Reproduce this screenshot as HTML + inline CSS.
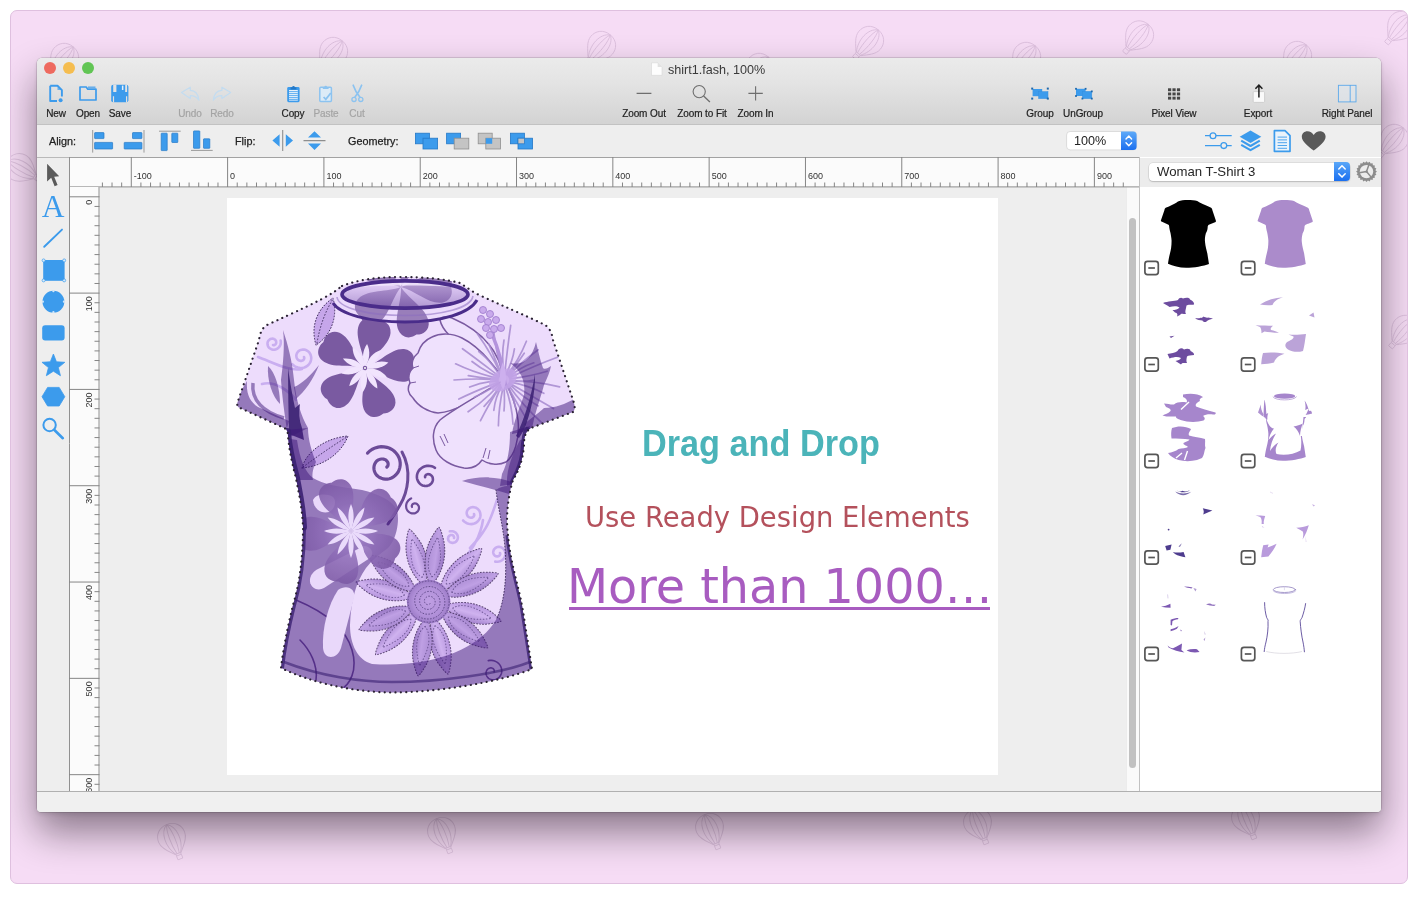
<!DOCTYPE html><html><head><meta charset="utf-8"><title>shirt1.fash</title><style>
html,body{margin:0;padding:0;background:#fff;}
body{width:1420px;height:898px;position:relative;overflow:hidden;font-family:"Liberation Sans",sans-serif;}
.abs{position:absolute}
#desk{position:absolute;left:10px;top:10px;width:1396px;height:871.5px;background:#f6dcf5;border:1px solid #dfc0df;border-radius:7px;overflow:hidden}
#win{will-change:transform;position:absolute;left:26px;top:47px;width:1344px;height:754px;background:#ececec;border-radius:5px 5px 4px 4px;box-shadow:0 0 0 0.5px rgba(0,0,0,.22),0 20px 38px rgba(10,0,10,.46),0 2px 5px rgba(0,0,0,.12);overflow:hidden}
#title{position:absolute;left:0;top:0;width:1344px;height:65.5px;background:linear-gradient(#ebebeb,#e3e3e3 40%,#d3d3d3);border-bottom:1px solid #c2c2c2}
.tl{position:absolute;top:4px;width:12px;height:12px;border-radius:50%}
.lbl{position:absolute;font-size:10px;color:#222;-webkit-text-stroke:0.2px #222;white-space:nowrap;transform:translateX(-50%);top:49.5px;line-height:12px;letter-spacing:-0.1px}
.lbl.dis{color:#a4a4a4;-webkit-text-stroke:0.2px #a4a4a4}
#tb2{position:absolute;left:0;top:66.5px;width:1344px;height:32.5px;background:#eeeeee;border-bottom:1px solid #b9b9b9}
.l2{position:absolute;font-size:10.8px;color:#222;-webkit-text-stroke:0.25px #222;top:10.5px;line-height:12px;white-space:nowrap}
</style></head><body>
<div id="desk">
<svg class="abs" style="left:0;top:0" width="1396" height="872" viewBox="0 0 1396 872" fill="none" stroke="#dcc0dd" stroke-width="0.9"><g transform="translate(53 47) rotate(40) scale(1.0)"><path d="M0,-14.5 C9,-14.5 14,-8 14,-1 C14,6 8,11 3.2,16.5 L-3.2,16.5 C-8,11 -14,6 -14,-1 C-14,-8 -9,-14.5 0,-14.5Z"/><path d="M0,-14.5 C-3,-8 -3.5,6 -1.2,16.5 M0,-14.5 C3,-8 3.5,6 1.2,16.5 M0,-14.5 C-9,-9 -9.5,6 -2.6,16.5 M0,-14.5 C9,-9 9.5,6 2.6,16.5"/><rect x="-2.6" y="18.4" width="5.2" height="4.2" rx="0.6"/><path d="M-2.8,16.5 L-2.3,18.4 M2.8,16.5 L2.3,18.4"/></g><g transform="translate(322 41) rotate(40) scale(1.0)"><path d="M0,-14.5 C9,-14.5 14,-8 14,-1 C14,6 8,11 3.2,16.5 L-3.2,16.5 C-8,11 -14,6 -14,-1 C-14,-8 -9,-14.5 0,-14.5Z"/><path d="M0,-14.5 C-3,-8 -3.5,6 -1.2,16.5 M0,-14.5 C3,-8 3.5,6 1.2,16.5 M0,-14.5 C-9,-9 -9.5,6 -2.6,16.5 M0,-14.5 C9,-9 9.5,6 2.6,16.5"/><rect x="-2.6" y="18.4" width="5.2" height="4.2" rx="0.6"/><path d="M-2.8,16.5 L-2.3,18.4 M2.8,16.5 L2.3,18.4"/></g><g transform="translate(590 35) rotate(40) scale(1.0)"><path d="M0,-14.5 C9,-14.5 14,-8 14,-1 C14,6 8,11 3.2,16.5 L-3.2,16.5 C-8,11 -14,6 -14,-1 C-14,-8 -9,-14.5 0,-14.5Z"/><path d="M0,-14.5 C-3,-8 -3.5,6 -1.2,16.5 M0,-14.5 C3,-8 3.5,6 1.2,16.5 M0,-14.5 C-9,-9 -9.5,6 -2.6,16.5 M0,-14.5 C9,-9 9.5,6 2.6,16.5"/><rect x="-2.6" y="18.4" width="5.2" height="4.2" rx="0.6"/><path d="M-2.8,16.5 L-2.3,18.4 M2.8,16.5 L2.3,18.4"/></g><g transform="translate(748 57) rotate(40) scale(1.0)"><path d="M0,-14.5 C9,-14.5 14,-8 14,-1 C14,6 8,11 3.2,16.5 L-3.2,16.5 C-8,11 -14,6 -14,-1 C-14,-8 -9,-14.5 0,-14.5Z"/><path d="M0,-14.5 C-3,-8 -3.5,6 -1.2,16.5 M0,-14.5 C3,-8 3.5,6 1.2,16.5 M0,-14.5 C-9,-9 -9.5,6 -2.6,16.5 M0,-14.5 C9,-9 9.5,6 2.6,16.5"/><rect x="-2.6" y="18.4" width="5.2" height="4.2" rx="0.6"/><path d="M-2.8,16.5 L-2.3,18.4 M2.8,16.5 L2.3,18.4"/></g><g transform="translate(858 30) rotate(40) scale(1.0)"><path d="M0,-14.5 C9,-14.5 14,-8 14,-1 C14,6 8,11 3.2,16.5 L-3.2,16.5 C-8,11 -14,6 -14,-1 C-14,-8 -9,-14.5 0,-14.5Z"/><path d="M0,-14.5 C-3,-8 -3.5,6 -1.2,16.5 M0,-14.5 C3,-8 3.5,6 1.2,16.5 M0,-14.5 C-9,-9 -9.5,6 -2.6,16.5 M0,-14.5 C9,-9 9.5,6 2.6,16.5"/><rect x="-2.6" y="18.4" width="5.2" height="4.2" rx="0.6"/><path d="M-2.8,16.5 L-2.3,18.4 M2.8,16.5 L2.3,18.4"/></g><g transform="translate(1015 46) rotate(40) scale(1.0)"><path d="M0,-14.5 C9,-14.5 14,-8 14,-1 C14,6 8,11 3.2,16.5 L-3.2,16.5 C-8,11 -14,6 -14,-1 C-14,-8 -9,-14.5 0,-14.5Z"/><path d="M0,-14.5 C-3,-8 -3.5,6 -1.2,16.5 M0,-14.5 C3,-8 3.5,6 1.2,16.5 M0,-14.5 C-9,-9 -9.5,6 -2.6,16.5 M0,-14.5 C9,-9 9.5,6 2.6,16.5"/><rect x="-2.6" y="18.4" width="5.2" height="4.2" rx="0.6"/><path d="M-2.8,16.5 L-2.3,18.4 M2.8,16.5 L2.3,18.4"/></g><g transform="translate(1128 24.5) rotate(40) scale(1.0)"><path d="M0,-14.5 C9,-14.5 14,-8 14,-1 C14,6 8,11 3.2,16.5 L-3.2,16.5 C-8,11 -14,6 -14,-1 C-14,-8 -9,-14.5 0,-14.5Z"/><path d="M0,-14.5 C-3,-8 -3.5,6 -1.2,16.5 M0,-14.5 C3,-8 3.5,6 1.2,16.5 M0,-14.5 C-9,-9 -9.5,6 -2.6,16.5 M0,-14.5 C9,-9 9.5,6 2.6,16.5"/><rect x="-2.6" y="18.4" width="5.2" height="4.2" rx="0.6"/><path d="M-2.8,16.5 L-2.3,18.4 M2.8,16.5 L2.3,18.4"/></g><g transform="translate(1286 45) rotate(40) scale(1.0)"><path d="M0,-14.5 C9,-14.5 14,-8 14,-1 C14,6 8,11 3.2,16.5 L-3.2,16.5 C-8,11 -14,6 -14,-1 C-14,-8 -9,-14.5 0,-14.5Z"/><path d="M0,-14.5 C-3,-8 -3.5,6 -1.2,16.5 M0,-14.5 C3,-8 3.5,6 1.2,16.5 M0,-14.5 C-9,-9 -9.5,6 -2.6,16.5 M0,-14.5 C9,-9 9.5,6 2.6,16.5"/><rect x="-2.6" y="18.4" width="5.2" height="4.2" rx="0.6"/><path d="M-2.8,16.5 L-2.3,18.4 M2.8,16.5 L2.3,18.4"/></g><g transform="translate(1390 15) rotate(40) scale(1.0)"><path d="M0,-14.5 C9,-14.5 14,-8 14,-1 C14,6 8,11 3.2,16.5 L-3.2,16.5 C-8,11 -14,6 -14,-1 C-14,-8 -9,-14.5 0,-14.5Z"/><path d="M0,-14.5 C-3,-8 -3.5,6 -1.2,16.5 M0,-14.5 C3,-8 3.5,6 1.2,16.5 M0,-14.5 C-9,-9 -9.5,6 -2.6,16.5 M0,-14.5 C9,-9 9.5,6 2.6,16.5"/><rect x="-2.6" y="18.4" width="5.2" height="4.2" rx="0.6"/><path d="M-2.8,16.5 L-2.3,18.4 M2.8,16.5 L2.3,18.4"/></g><g transform="translate(1383 128) rotate(40) scale(1.0)"><path d="M0,-14.5 C9,-14.5 14,-8 14,-1 C14,6 8,11 3.2,16.5 L-3.2,16.5 C-8,11 -14,6 -14,-1 C-14,-8 -9,-14.5 0,-14.5Z"/><path d="M0,-14.5 C-3,-8 -3.5,6 -1.2,16.5 M0,-14.5 C3,-8 3.5,6 1.2,16.5 M0,-14.5 C-9,-9 -9.5,6 -2.6,16.5 M0,-14.5 C9,-9 9.5,6 2.6,16.5"/><rect x="-2.6" y="18.4" width="5.2" height="4.2" rx="0.6"/><path d="M-2.8,16.5 L-2.3,18.4 M2.8,16.5 L2.3,18.4"/></g><g transform="translate(1394 319) rotate(40) scale(1.0)"><path d="M0,-14.5 C9,-14.5 14,-8 14,-1 C14,6 8,11 3.2,16.5 L-3.2,16.5 C-8,11 -14,6 -14,-1 C-14,-8 -9,-14.5 0,-14.5Z"/><path d="M0,-14.5 C-3,-8 -3.5,6 -1.2,16.5 M0,-14.5 C3,-8 3.5,6 1.2,16.5 M0,-14.5 C-9,-9 -9.5,6 -2.6,16.5 M0,-14.5 C9,-9 9.5,6 2.6,16.5"/><rect x="-2.6" y="18.4" width="5.2" height="4.2" rx="0.6"/><path d="M-2.8,16.5 L-2.3,18.4 M2.8,16.5 L2.3,18.4"/></g><g transform="translate(9 157) rotate(-60) scale(1.0)"><path d="M0,-14.5 C9,-14.5 14,-8 14,-1 C14,6 8,11 3.2,16.5 L-3.2,16.5 C-8,11 -14,6 -14,-1 C-14,-8 -9,-14.5 0,-14.5Z"/><path d="M0,-14.5 C-3,-8 -3.5,6 -1.2,16.5 M0,-14.5 C3,-8 3.5,6 1.2,16.5 M0,-14.5 C-9,-9 -9.5,6 -2.6,16.5 M0,-14.5 C9,-9 9.5,6 2.6,16.5"/><rect x="-2.6" y="18.4" width="5.2" height="4.2" rx="0.6"/><path d="M-2.8,16.5 L-2.3,18.4 M2.8,16.5 L2.3,18.4"/></g><g transform="translate(161 827) rotate(-22) scale(1.0)"><path d="M0,-14.5 C9,-14.5 14,-8 14,-1 C14,6 8,11 3.2,16.5 L-3.2,16.5 C-8,11 -14,6 -14,-1 C-14,-8 -9,-14.5 0,-14.5Z"/><path d="M0,-14.5 C-3,-8 -3.5,6 -1.2,16.5 M0,-14.5 C3,-8 3.5,6 1.2,16.5 M0,-14.5 C-9,-9 -9.5,6 -2.6,16.5 M0,-14.5 C9,-9 9.5,6 2.6,16.5"/><rect x="-2.6" y="18.4" width="5.2" height="4.2" rx="0.6"/><path d="M-2.8,16.5 L-2.3,18.4 M2.8,16.5 L2.3,18.4"/></g><g transform="translate(431 821) rotate(-22) scale(1.0)"><path d="M0,-14.5 C9,-14.5 14,-8 14,-1 C14,6 8,11 3.2,16.5 L-3.2,16.5 C-8,11 -14,6 -14,-1 C-14,-8 -9,-14.5 0,-14.5Z"/><path d="M0,-14.5 C-3,-8 -3.5,6 -1.2,16.5 M0,-14.5 C3,-8 3.5,6 1.2,16.5 M0,-14.5 C-9,-9 -9.5,6 -2.6,16.5 M0,-14.5 C9,-9 9.5,6 2.6,16.5"/><rect x="-2.6" y="18.4" width="5.2" height="4.2" rx="0.6"/><path d="M-2.8,16.5 L-2.3,18.4 M2.8,16.5 L2.3,18.4"/></g><g transform="translate(699 817) rotate(-22) scale(1.0)"><path d="M0,-14.5 C9,-14.5 14,-8 14,-1 C14,6 8,11 3.2,16.5 L-3.2,16.5 C-8,11 -14,6 -14,-1 C-14,-8 -9,-14.5 0,-14.5Z"/><path d="M0,-14.5 C-3,-8 -3.5,6 -1.2,16.5 M0,-14.5 C3,-8 3.5,6 1.2,16.5 M0,-14.5 C-9,-9 -9.5,6 -2.6,16.5 M0,-14.5 C9,-9 9.5,6 2.6,16.5"/><rect x="-2.6" y="18.4" width="5.2" height="4.2" rx="0.6"/><path d="M-2.8,16.5 L-2.3,18.4 M2.8,16.5 L2.3,18.4"/></g><g transform="translate(967 812) rotate(-22) scale(1.0)"><path d="M0,-14.5 C9,-14.5 14,-8 14,-1 C14,6 8,11 3.2,16.5 L-3.2,16.5 C-8,11 -14,6 -14,-1 C-14,-8 -9,-14.5 0,-14.5Z"/><path d="M0,-14.5 C-3,-8 -3.5,6 -1.2,16.5 M0,-14.5 C3,-8 3.5,6 1.2,16.5 M0,-14.5 C-9,-9 -9.5,6 -2.6,16.5 M0,-14.5 C9,-9 9.5,6 2.6,16.5"/><rect x="-2.6" y="18.4" width="5.2" height="4.2" rx="0.6"/><path d="M-2.8,16.5 L-2.3,18.4 M2.8,16.5 L2.3,18.4"/></g><g transform="translate(1235 807) rotate(-22) scale(1.0)"><path d="M0,-14.5 C9,-14.5 14,-8 14,-1 C14,6 8,11 3.2,16.5 L-3.2,16.5 C-8,11 -14,6 -14,-1 C-14,-8 -9,-14.5 0,-14.5Z"/><path d="M0,-14.5 C-3,-8 -3.5,6 -1.2,16.5 M0,-14.5 C3,-8 3.5,6 1.2,16.5 M0,-14.5 C-9,-9 -9.5,6 -2.6,16.5 M0,-14.5 C9,-9 9.5,6 2.6,16.5"/><rect x="-2.6" y="18.4" width="5.2" height="4.2" rx="0.6"/><path d="M-2.8,16.5 L-2.3,18.4 M2.8,16.5 L2.3,18.4"/></g></svg>
<div id="win">
<div id="title">
<div class="tl" style="left:7.0px;background:#ee6a5f"></div>
<div class="tl" style="left:26.1px;background:#f5bd4f"></div>
<div class="tl" style="left:45.4px;background:#61c554"></div>
<div class="abs" style="left:631px;top:4.5px;font-size:12.6px;line-height:14px;color:#3a3a3a;white-space:nowrap">shirt1.fash, 100%</div>
<div class="lbl" style="left:19px">New</div>
<div class="lbl" style="left:51px">Open</div>
<div class="lbl" style="left:83px">Save</div>
<div class="lbl dis" style="left:153px">Undo</div>
<div class="lbl dis" style="left:185px">Redo</div>
<div class="lbl" style="left:256px">Copy</div>
<div class="lbl dis" style="left:289px">Paste</div>
<div class="lbl dis" style="left:320px">Cut</div>
<div class="lbl" style="left:607px">Zoom Out</div>
<div class="lbl" style="left:665px">Zoom to Fit</div>
<div class="lbl" style="left:718.5px">Zoom In</div>
<div class="lbl" style="left:1003px">Group</div>
<div class="lbl" style="left:1046px">UnGroup</div>
<div class="lbl" style="left:1137px">Pixel View</div>
<div class="lbl" style="left:1221px">Export</div>
<div class="lbl" style="left:1310px">Right Panel</div>
<svg class="abs" style="left:0;top:0" width="1344" height="100" viewBox="37 58 1344 100"><path d="M651.5,62.8 h6.2 l4.3,4.3 v8.2 h-10.5z" fill="#fdfdfd" stroke="#d0d0d0" stroke-width="0.5"/><path d="M657.7,62.8 v4.3 h4.3z" fill="#e2e2e2"/><path d="M50.2,85.7 h7.3 l4.4,4.4 v6.5 M57,101 h-6.8 v-15.3" fill="none" stroke="#3c9bec" stroke-width="1.9" stroke-linejoin="round"/><path d="M57.5,85.7 v4.4 h4.4z" fill="#3c9bec" opacity="0.7"/><circle cx="60.6" cy="100.2" r="2" fill="#3c9bec"/><path d="M80,100 v-13 h6.2 l1.6,2.2 h8.2 v10.8z" fill="none" stroke="#3c9bec" stroke-width="1.7" stroke-linejoin="round"/><path d="M88,87.2 h7.5" stroke="#3c9bec" stroke-width="1.4" opacity="0.8"/><path d="M113.2,84.8 h13.2 a2,2 0 0 1 2,2 v13.5 a2,2 0 0 1 -2,2 h-13.2 a2,2 0 0 1 -2,-2 v-13.5 a2,2 0 0 1 2,-2z" fill="#3c9bec"/><rect x="113.2" y="84.6" width="3.2" height="7.4" fill="#e3e3e3"/><rect x="125.2" y="84.6" width="1.9" height="7.4" fill="#e3e3e3"/><rect x="121.9" y="85.6" width="1.5" height="4.4" fill="#e6f1fb"/><path d="M113.5,102.4 v-6.2 M126.6,102.4 v-6.2" stroke="#e0e0e0" stroke-width="1.2" fill="none"/><path d="M181.5,92.5 l8.8,-5.3 v3.2 c5,0.3 8,4 8.6,9.8 c-2,-3.2 -4.6,-4.6 -8.6,-4.6 v3z" fill="none" stroke="#c3dcf0" stroke-width="1.2" stroke-linejoin="round"/><path d="M230.7,92.5 l-8.8,-5.3 v3.2 c-5,0.3 -8,4 -8.6,9.8 c2,-3.2 4.6,-4.6 8.6,-4.6 v3z" fill="none" stroke="#c3dcf0" stroke-width="1.2" stroke-linejoin="round"/><rect x="287.2" y="87" width="12.4" height="15.2" rx="1.4" fill="#3c9bec"/><rect x="289" y="90" width="8.8" height="10.6" fill="#e9f2fb"/><path d="M289,91.6h8.8M289,93.6h8.8M289,95.6h8.8M289,97.6h8.8M289,99.4h8.8" stroke="#3c9bec" stroke-width="0.8"/><path d="M290.6,89.6 v-2.4 h1.6 a1.3,1.3 0 0 1 2.6,0 h1.6 v2.4z" fill="#2579c7"/><rect x="319.8" y="87.2" width="11.6" height="14.4" rx="1" fill="#dcebf7" stroke="#8cc3f0" stroke-width="1.5"/><path d="M322.8,89 v-2 h1.6 a1.3,1.3 0 0 1 2.6,0 h1.6 v2z" fill="#8cc3f0"/><path d="M323.6,97 l2.2,2.4 l5,-6.4" fill="none" stroke="#8cc3f0" stroke-width="1.8"/><path d="M353.2,85.2 c1.5,4.5 4,8.5 6.6,11.8 M361.6,85.2 c-1.5,4.5 -4,8.5 -6.6,11.8" fill="none" stroke="#8cc3f0" stroke-width="1.7" stroke-linecap="round"/><circle cx="354" cy="99.4" r="2.1" fill="none" stroke="#8cc3f0" stroke-width="1.3"/><circle cx="360.8" cy="99.4" r="2.1" fill="none" stroke="#8cc3f0" stroke-width="1.3"/><path d="M636.6,93.4 h14.8" stroke="#6e6e6e" stroke-width="1.1"/><circle cx="699.2" cy="91.6" r="6.1" fill="none" stroke="#6e6e6e" stroke-width="1.1"/><path d="M703.6,96 l6.3,6" stroke="#6e6e6e" stroke-width="1.3"/><path d="M748.4,93.4 h14.4 M755.6,86.2 v14.4" stroke="#6e6e6e" stroke-width="1.1"/><rect x="1032.6" y="89" width="9.6" height="7.2" fill="#3c9bec"/><rect x="1038.6" y="91.6" width="9.4" height="7" fill="#3c9bec" stroke="#3490df" stroke-width="0.5"/><rect x="1031.2" y="87.6" width="2" height="2" fill="#1d68ad"/><rect x="1046.8" y="87.6" width="2" height="2" fill="#1d68ad"/><rect x="1031.2" y="97.6" width="2" height="2" fill="#1d68ad"/><rect x="1046.8" y="97.6" width="2" height="2" fill="#1d68ad"/><rect x="1076" y="88.8" width="9.6" height="7.2" fill="#3c9bec"/><rect x="1082.4" y="91.4" width="9.4" height="7.2" fill="#3c9bec" stroke="#3490df" stroke-width="0.5"/><rect x="1075.1" y="87.89999999999999" width="1.8" height="1.8" fill="#1d68ad"/><rect x="1084.6999999999998" y="87.89999999999999" width="1.8" height="1.8" fill="#1d68ad"/><rect x="1075.1" y="95.1" width="1.8" height="1.8" fill="#1d68ad"/><rect x="1081.5" y="97.69999999999999" width="1.8" height="1.8" fill="#1d68ad"/><rect x="1090.8999999999999" y="97.69999999999999" width="1.8" height="1.8" fill="#1d68ad"/><rect x="1090.8999999999999" y="90.5" width="1.8" height="1.8" fill="#1d68ad"/><rect x="1168.0" y="88.3" width="3.2" height="2.9" fill="#474747"/><rect x="1168.0" y="92.5" width="3.2" height="2.9" fill="#474747"/><rect x="1168.0" y="96.7" width="3.2" height="2.9" fill="#474747"/><rect x="1172.45" y="88.3" width="3.2" height="2.9" fill="#474747"/><rect x="1172.45" y="92.5" width="3.2" height="2.9" fill="#474747"/><rect x="1172.45" y="96.7" width="3.2" height="2.9" fill="#474747"/><rect x="1176.9" y="88.3" width="3.2" height="2.9" fill="#474747"/><rect x="1176.9" y="92.5" width="3.2" height="2.9" fill="#474747"/><rect x="1176.9" y="96.7" width="3.2" height="2.9" fill="#474747"/><rect x="1253.2" y="91.6" width="11.4" height="10.8" rx="1" fill="#fafafa" stroke="#c6c6c6" stroke-width="0.8"/><path d="M1258.9,97.4 v-11.6 M1255.4,88.8 l3.5,-3.6 l3.5,3.6" fill="none" stroke="#1e1e1e" stroke-width="1.5"/><rect x="1338.4" y="85.3" width="17.6" height="16.6" fill="#dde6ee" fill-opacity="0.5" stroke="#3c9bec" stroke-width="0.9" stroke-opacity="0.8"/><path d="M1350.2,85.3 v16.6" stroke="#3c9bec" stroke-width="0.9" stroke-opacity="0.8"/></svg>
</div>
<div id="tb2">
<svg class="abs" style="left:0;top:-1.3px" width="1344" height="34" viewBox="37 124 1344 34"><path d="M92.7,131 V153.6" stroke="#9a9a9a" stroke-width="1"/><rect x="94.6" y="133.6" width="9.4" height="6.0" rx="0.5" fill="#3c9bec" stroke="#2579c7" stroke-width="0.7"/><rect x="94.6" y="143.4" width="18.0" height="6.6" rx="0.5" fill="#3c9bec" stroke="#2579c7" stroke-width="0.7"/><path d="M144,131 V153.6" stroke="#9a9a9a" stroke-width="1"/><rect x="132.5" y="133.6" width="9.4" height="6.0" rx="0.5" fill="#3c9bec" stroke="#2579c7" stroke-width="0.7"/><rect x="124.2" y="143.4" width="17.7" height="6.6" rx="0.5" fill="#3c9bec" stroke="#2579c7" stroke-width="0.7"/><path d="M159,132.2 H180.7" stroke="#9a9a9a" stroke-width="1"/><rect x="161.2" y="134.2" width="6.0" height="17.4" rx="0.5" fill="#3c9bec" stroke="#2579c7" stroke-width="0.7"/><rect x="171.8" y="134.2" width="6.0" height="9.3" rx="0.5" fill="#3c9bec" stroke="#2579c7" stroke-width="0.7"/><path d="M191,151.4 H212.7" stroke="#9a9a9a" stroke-width="1"/><rect x="193.5" y="131.9" width="6.3" height="17.4" rx="0.5" fill="#3c9bec" stroke="#2579c7" stroke-width="0.7"/><rect x="203.5" y="139.8" width="6.3" height="9.5" rx="0.5" fill="#3c9bec" stroke="#2579c7" stroke-width="0.7"/><path d="M282.7,131 V152" stroke="#8e8e8e" stroke-width="1.1"/><path d="M279.6,135.2 v12.6 l-7.2,-6.3z M285.8,135.2 v12.6 l7.2,-6.3z" fill="#3c9bec"/><path d="M303.5,141.6 H325.5" stroke="#8e8e8e" stroke-width="1.1"/><path d="M308,138.6 h13 l-6.5,-6.4z M308,144.6 h13 l-6.5,6.4z" fill="#3c9bec"/><rect x="415.4" y="134.2" width="14" height="10.6" fill="#3c9bec" stroke="#2579c7" stroke-width="0.8"/><rect x="423" y="139.2" width="14.6" height="10.8" fill="#3c9bec" stroke="#2579c7" stroke-width="0.8"/><rect x="446.6" y="134.2" width="14" height="10.6" fill="#3c9bec" stroke="#2579c7" stroke-width="0.8"/><rect x="454.2" y="139.2" width="14.6" height="10.8" fill="#c4c4c4" stroke="#8f8f8f" stroke-width="0.8"/><rect x="478.2" y="134.2" width="14" height="10.6" fill="#c4c4c4" stroke="#8f8f8f" stroke-width="0.8"/><rect x="485.8" y="139.2" width="14.6" height="10.8" fill="#c4c4c4" stroke="#8f8f8f" stroke-width="0.8"/><rect x="485.8" y="139.2" width="6.4" height="5.6" fill="#3c9bec"/><rect x="510.4" y="134.2" width="14" height="10.6" fill="#3c9bec" stroke="#2579c7" stroke-width="0.8"/><rect x="518" y="139.2" width="14.6" height="10.8" fill="#3c9bec" stroke="#2579c7" stroke-width="0.8"/><rect x="518" y="139.2" width="6.4" height="5.6" fill="#c4c4c4" stroke="#2579c7" stroke-width="0.7"/><g transform="translate(0 1.1)"><rect x="1066.6" y="131.4" width="70" height="18.4" rx="3.5" fill="#fff" stroke="#c9c9c9" stroke-width="0.6"/><defs><linearGradient id="stp" x1="0" y1="0" x2="0" y2="1"><stop offset="0" stop-color="#5eaaf9"/><stop offset="1" stop-color="#1c70ef"/></linearGradient></defs><path d="M1121,131.4 h12.1 a3.5,3.5 0 0 1 3.5,3.5 v11.4 a3.5,3.5 0 0 1 -3.5,3.5 h-12.1z" fill="url(#stp)"/><path d="M1126,138.8 l2.8,-3 l2.8,3 M1126,142.6 l2.8,3 l2.8,-3" fill="none" stroke="#fff" stroke-width="1.4" stroke-linecap="round" stroke-linejoin="round"/><text x="1074" y="145.2" font-family="Liberation Sans, sans-serif" font-size="12.6" fill="#222">100%</text><path d="M1205,135.6 h5 M1216,135.6 h15.7 M1205,145.5 h15.7 M1226.8,145.5 h4.9" stroke="#3c9bec" stroke-width="1.3"/><circle cx="1213" cy="135.6" r="2.9" fill="none" stroke="#3c9bec" stroke-width="1.3"/><circle cx="1223.8" cy="145.5" r="2.9" fill="none" stroke="#3c9bec" stroke-width="1.3"/><path d="M1250.5,130.4 l10.8,6.2 l-10.8,6.2 l-10.8,-6.2z" fill="#3c9bec"/><path d="M1241.2,140.6 l9.3,5.3 l9.3,-5.3 M1241.2,144.8 l9.3,5.3 l9.3,-5.3" fill="none" stroke="#3c9bec" stroke-width="2.1" stroke-linejoin="round"/><path d="M1274.4,130.6 h10.6 l5,5 v15.6 h-15.6z" fill="#eaf3fb" stroke="#3c9bec" stroke-width="1.7" stroke-linejoin="round"/><path d="M1277.6,137h9.4M1277.6,139.8h9.4M1277.6,142.6h9.4M1277.6,145.4h9.4M1277.6,148.2h9.4" stroke="#3c9bec" stroke-width="0.9"/><path d="M1313.7,150.4 C1308,146 1301.8,141.5 1301.8,136.6 C1301.8,133.4 1304.4,131.2 1307.4,131.2 C1310,131.2 1312.4,132.6 1313.7,135 C1315,132.6 1317.4,131.2 1320,131.2 C1323,131.2 1325.6,133.4 1325.6,136.6 C1325.6,141.5 1319.4,146 1313.7,150.4Z" fill="#595959"/></g></svg>
<div class="l2" style="left:12px">Align:</div><div class="l2" style="left:198px">Flip:</div><div class="l2" style="left:311px">Geometry:</div>
</div>
<div class="abs" style="left:0;top:100px;width:32px;height:634px;background:#eeeeee"></div>
<svg class="abs" style="left:0;top:100px" width="32" height="300" viewBox="37 158 32 300"><path d="M47.1,163.8 V181.6 L51.2,177.8 L54.6,186.2 L57.6,184.9 L54.2,176.7 L59.2,176.2Z" fill="#5a5a5a"/><text x="53.1" y="217" text-anchor="middle" font-family="Liberation Serif, serif" font-size="31.5" fill="#3c9bec">A</text><path d="M44.2,246.8 L62,229.6" stroke="#3c9bec" stroke-width="1.9" stroke-linecap="round"/><rect x="43.2" y="260" width="21.4" height="20.8" fill="#3c9bec"/><circle cx="43.6" cy="260.4" r="1.5" fill="#d8ecfb" stroke="#3c9bec" stroke-width="0.7"/><circle cx="64.2" cy="260.4" r="1.5" fill="#d8ecfb" stroke="#3c9bec" stroke-width="0.7"/><circle cx="43.6" cy="280.4" r="1.5" fill="#d8ecfb" stroke="#3c9bec" stroke-width="0.7"/><circle cx="64.2" cy="280.4" r="1.5" fill="#d8ecfb" stroke="#3c9bec" stroke-width="0.7"/><circle cx="53.4" cy="301.7" r="10.9" fill="#3c9bec"/><circle cx="53.4" cy="291.2" r="1.1" fill="#cfe6fa"/><circle cx="53.4" cy="312.2" r="1.1" fill="#cfe6fa"/><circle cx="42.9" cy="301.7" r="1.1" fill="#cfe6fa"/><circle cx="63.9" cy="301.7" r="1.1" fill="#cfe6fa"/><rect x="42.2" y="325.2" width="22.4" height="15.4" rx="3" fill="#3c9bec"/><polygon points="53.4,354.0 56.46,361.79 64.81,362.29 58.35,367.61 60.45,375.71 53.4,371.2 46.35,375.71 48.45,367.61 41.99,362.29 50.34,361.79" fill="#3c9bec" stroke="#3c9bec" stroke-width="0.8" stroke-linejoin="round"/><polygon points="42,396.7 47.6,387.4 59.2,387.4 64.8,396.7 59.2,406 47.6,406" fill="#3c9bec" stroke="#3c9bec" stroke-width="0.8" stroke-linejoin="round"/><circle cx="49.6" cy="425" r="6.2" fill="none" stroke="#3c9bec" stroke-width="2"/><path d="M54.4,430 L62.8,438.2" stroke="#3c9bec" stroke-width="2.6" stroke-linecap="round"/></svg>
<div class="abs" style="left:62px;top:129px;width:1027px;height:605px;background:#eeeeee"></div>
<div class="abs" style="left:190px;top:140px;width:771px;height:577px;background:#fff"></div>
<div class="abs" style="left:1089px;top:129px;width:13px;height:605px;background:#fafafa;border-left:1px solid #ececec;box-sizing:border-box"></div>
<div class="abs" style="left:1092px;top:160px;width:7px;height:550px;background:#c1c1c1;border-radius:4px"></div>
<svg class="abs" style="left:32px;top:99px" width="1071" height="31" viewBox="0 0 1071 31"><rect x="0" y="0" width="1071" height="30" fill="#fbfbfb"/><path d="M0 0.5H1071M0 29.8H1071" stroke="#a2a2a2" stroke-width="1.2" fill="none"/><path d="M0.5 0V30" stroke="#909090" stroke-width="1"/><path d="M33.4 25.5V30M43.03 25.5V30M52.66 25.5V30M62.29 0V30M71.92 25.5V30M81.55 25.5V30M91.18 25.5V30M100.81 25.5V30M110.44 25.5V30M120.08 25.5V30M129.71 25.5V30M139.34 25.5V30M148.97 25.5V30M158.6 0V30M168.23 25.5V30M177.86 25.5V30M187.49 25.5V30M197.12 25.5V30M206.75 25.5V30M216.39 25.5V30M226.02 25.5V30M235.65 25.5V30M245.28 25.5V30M254.91 0V30M264.54 25.5V30M274.17 25.5V30M283.8 25.5V30M293.43 25.5V30M303.06 25.5V30M312.7 25.5V30M322.33 25.5V30M331.96 25.5V30M341.59 25.5V30M351.22 0V30M360.85 25.5V30M370.48 25.5V30M380.11 25.5V30M389.74 25.5V30M399.38 25.5V30M409.01 25.5V30M418.64 25.5V30M428.27 25.5V30M437.9 25.5V30M447.53 0V30M457.16 25.5V30M466.79 25.5V30M476.42 25.5V30M486.05 25.5V30M495.68 25.5V30M505.32 25.5V30M514.95 25.5V30M524.58 25.5V30M534.21 25.5V30M543.84 0V30M553.47 25.5V30M563.1 25.5V30M572.73 25.5V30M582.36 25.5V30M592.0 25.5V30M601.63 25.5V30M611.26 25.5V30M620.89 25.5V30M630.52 25.5V30M640.15 0V30M649.78 25.5V30M659.41 25.5V30M669.04 25.5V30M678.67 25.5V30M688.3 25.5V30M697.94 25.5V30M707.57 25.5V30M717.2 25.5V30M726.83 25.5V30M736.46 0V30M746.09 25.5V30M755.72 25.5V30M765.35 25.5V30M774.98 25.5V30M784.62 25.5V30M794.25 25.5V30M803.88 25.5V30M813.51 25.5V30M823.14 25.5V30M832.77 0V30M842.4 25.5V30M852.03 25.5V30M861.66 25.5V30M871.29 25.5V30M880.92 25.5V30M890.56 25.5V30M900.19 25.5V30M909.82 25.5V30M919.45 25.5V30M929.08 0V30M938.71 25.5V30M948.34 25.5V30M957.97 25.5V30M967.6 25.5V30M977.24 25.5V30M986.87 25.5V30M996.5 25.5V30M1006.13 25.5V30M1015.76 25.5V30M1025.39 0V30M1035.02 25.5V30M1044.65 25.5V30M1054.28 25.5V30" stroke="#858585" stroke-width="1" fill="none"/><text x="64.79" y="21.5" font-family="Liberation Sans, sans-serif" font-size="9" fill="#333">-100</text><text x="161.1" y="21.5" font-family="Liberation Sans, sans-serif" font-size="9" fill="#333">0</text><text x="257.41" y="21.5" font-family="Liberation Sans, sans-serif" font-size="9" fill="#333">100</text><text x="353.72" y="21.5" font-family="Liberation Sans, sans-serif" font-size="9" fill="#333">200</text><text x="450.03" y="21.5" font-family="Liberation Sans, sans-serif" font-size="9" fill="#333">300</text><text x="546.34" y="21.5" font-family="Liberation Sans, sans-serif" font-size="9" fill="#333">400</text><text x="642.65" y="21.5" font-family="Liberation Sans, sans-serif" font-size="9" fill="#333">500</text><text x="738.96" y="21.5" font-family="Liberation Sans, sans-serif" font-size="9" fill="#333">600</text><text x="835.27" y="21.5" font-family="Liberation Sans, sans-serif" font-size="9" fill="#333">700</text><text x="931.58" y="21.5" font-family="Liberation Sans, sans-serif" font-size="9" fill="#333">800</text><text x="1027.89" y="21.5" font-family="Liberation Sans, sans-serif" font-size="9" fill="#333">900</text></svg>
<svg class="abs" style="left:32px;top:129px" width="31" height="605" viewBox="0 0 31 605"><rect x="0" y="0" width="30.5" height="605" fill="#fbfbfb"/><path d="M0.5 0V605M30 0V605" stroke="#909090" stroke-width="1" fill="none"/><path d="M0 9.8H30.5M25.5 19.43H30.5M25.5 29.06H30.5M25.5 38.69H30.5M25.5 48.32H30.5M25.5 57.96H30.5M25.5 67.59H30.5M25.5 77.22H30.5M25.5 86.85H30.5M25.5 96.48H30.5M0 106.11H30.5M25.5 115.74H30.5M25.5 125.37H30.5M25.5 135.0H30.5M25.5 144.63H30.5M25.5 154.26H30.5M25.5 163.9H30.5M25.5 173.53H30.5M25.5 183.16H30.5M25.5 192.79H30.5M0 202.42H30.5M25.5 212.05H30.5M25.5 221.68H30.5M25.5 231.31H30.5M25.5 240.94H30.5M25.5 250.57H30.5M25.5 260.21H30.5M25.5 269.84H30.5M25.5 279.47H30.5M25.5 289.1H30.5M0 298.73H30.5M25.5 308.36H30.5M25.5 317.99H30.5M25.5 327.62H30.5M25.5 337.25H30.5M25.5 346.88H30.5M25.5 356.52H30.5M25.5 366.15H30.5M25.5 375.78H30.5M25.5 385.41H30.5M0 395.04H30.5M25.5 404.67H30.5M25.5 414.3H30.5M25.5 423.93H30.5M25.5 433.56H30.5M25.5 443.19H30.5M25.5 452.83H30.5M25.5 462.46H30.5M25.5 472.09H30.5M25.5 481.72H30.5M0 491.35H30.5M25.5 500.98H30.5M25.5 510.61H30.5M25.5 520.24H30.5M25.5 529.87H30.5M25.5 539.5H30.5M25.5 549.14H30.5M25.5 558.77H30.5M25.5 568.4H30.5M25.5 578.03H30.5M0 587.66H30.5M25.5 597.29H30.5" stroke="#858585" stroke-width="1" fill="none"/><text transform="translate(23 12.8) rotate(-90)" text-anchor="end" font-family="Liberation Sans, sans-serif" font-size="9" fill="#333">0</text><text transform="translate(23 109.11) rotate(-90)" text-anchor="end" font-family="Liberation Sans, sans-serif" font-size="9" fill="#333">100</text><text transform="translate(23 205.42) rotate(-90)" text-anchor="end" font-family="Liberation Sans, sans-serif" font-size="9" fill="#333">200</text><text transform="translate(23 301.73) rotate(-90)" text-anchor="end" font-family="Liberation Sans, sans-serif" font-size="9" fill="#333">300</text><text transform="translate(23 398.04) rotate(-90)" text-anchor="end" font-family="Liberation Sans, sans-serif" font-size="9" fill="#333">400</text><text transform="translate(23 494.35) rotate(-90)" text-anchor="end" font-family="Liberation Sans, sans-serif" font-size="9" fill="#333">500</text><text transform="translate(23 590.66) rotate(-90)" text-anchor="end" font-family="Liberation Sans, sans-serif" font-size="9" fill="#333">600</text></svg>
<svg class="abs" style="left:190px;top:200px" width="400" height="450" viewBox="227 258 400 450"><defs><clipPath id="shc"><path d="M342,286 C360,279 380,277 400,277 C425,277 445,279 460,283 L475,293 C500,305 525,315 545,325 C550,328 552,334 553,340 L574,403 C575,407 575,410 573,412 L531,428 C526,431 524,436 524,445 C523,460 519,470 513,480 C507,500 506,520 508,535 C510,560 518,585 522,605 C526,630 529,650 532,669 C500,682 440,692 392,692.5 C350,692 310,682 281,668 C283,650 288,625 293,605 C299,585 303,560 303,527 C302,505 298,490 296,478 C291,460 289,447 288,436 C288,432 287,429 284,428 L238,407 C237,405 237,403 238,401 L259,340 C260,333 262,328 267,325 C295,312 318,302 334,292 Z"/></clipPath><linearGradient id="petg" x1="0" y1="0" x2="1" y2="0"><stop offset="0" stop-color="#b796df"/><stop offset="0.5" stop-color="#cfb2ef"/><stop offset="1" stop-color="#a584cf"/></linearGradient><linearGradient id="petg2" x1="0" y1="0" x2="1" y2="0"><stop offset="0" stop-color="#a98ad2"/><stop offset="0.55" stop-color="#bfa0e4"/><stop offset="1" stop-color="#9877c4"/></linearGradient><radialGradient id="discg"><stop offset="0" stop-color="#c0a0e4"/><stop offset="0.7" stop-color="#b08fd8"/><stop offset="1" stop-color="#9b7ac6"/></radialGradient><linearGradient id="colg" x1="0" y1="0" x2="0" y2="1"><stop offset="0" stop-color="#e2d0f6"/><stop offset="0.45" stop-color="#a88ad0"/><stop offset="1" stop-color="#5d3a96"/></linearGradient><radialGradient id="f2g" gradientUnits="userSpaceOnUse" cx="0" cy="0" r="52"><stop offset="0" stop-color="#a98ad0"/><stop offset="0.55" stop-color="#8d6bb6"/><stop offset="1" stop-color="#7d5aa6"/></radialGradient></defs><path d="M342,286 C360,279 380,277 400,277 C425,277 445,279 460,283 L475,293 C500,305 525,315 545,325 C550,328 552,334 553,340 L574,403 C575,407 575,410 573,412 L531,428 C526,431 524,436 524,445 C523,460 519,470 513,480 C507,500 506,520 508,535 C510,560 518,585 522,605 C526,630 529,650 532,669 C500,682 440,692 392,692.5 C350,692 310,682 281,668 C283,650 288,625 293,605 C299,585 303,560 303,527 C302,505 298,490 296,478 C291,460 289,447 288,436 C288,432 287,429 284,428 L238,407 C237,405 237,403 238,401 L259,340 C260,333 262,328 267,325 C295,312 318,302 334,292 Z" fill="#eddcfc"/><g clip-path="url(#shc)"><g fill="#7a5aa1" opacity="1" ><path d="M0,0 C-4.1,-15.0 -17.3,-27.5 -15.7,-41.0 C-14.0,-51.0 -5.0,-52.0 0,-50.0 C5.0,-52.0 14.0,-51.0 15.7,-41.0 C17.3,-27.5 4.1,-15.0 0,0Z" transform="translate(401 287) rotate(18.0)"/><path d="M0,0 C-4.1,-15.0 -17.3,-27.5 -15.7,-41.0 C-14.0,-51.0 -5.0,-52.0 0,-50.0 C5.0,-52.0 14.0,-51.0 15.7,-41.0 C17.3,-27.5 4.1,-15.0 0,0Z" transform="translate(401 287) rotate(90.0)"/><path d="M0,0 C-4.1,-15.0 -17.3,-27.5 -15.7,-41.0 C-14.0,-51.0 -5.0,-52.0 0,-50.0 C5.0,-52.0 14.0,-51.0 15.7,-41.0 C17.3,-27.5 4.1,-15.0 0,0Z" transform="translate(401 287) rotate(162.0)"/><path d="M0,0 C-4.1,-15.0 -17.3,-27.5 -15.7,-41.0 C-14.0,-51.0 -5.0,-52.0 0,-50.0 C5.0,-52.0 14.0,-51.0 15.7,-41.0 C17.3,-27.5 4.1,-15.0 0,0Z" transform="translate(401 287) rotate(234.0)"/><path d="M0,0 C-4.1,-15.0 -17.3,-27.5 -15.7,-41.0 C-14.0,-51.0 -5.0,-52.0 0,-50.0 C5.0,-52.0 14.0,-51.0 15.7,-41.0 C17.3,-27.5 4.1,-15.0 0,0Z" transform="translate(401 287) rotate(306.0)"/></g><g fill="#7a5aa1" opacity="1" ><path d="M0,0 C-4.3,-14.7 -18.0,-27.0 -16.3,-40.2 C-14.6,-50.0 -5.1,-51.0 0,-49.0 C5.1,-51.0 14.6,-50.0 16.3,-40.2 C18.0,-27.0 4.3,-14.7 0,0Z" transform="translate(365 368) rotate(14.0)"/><path d="M0,0 C-4.3,-14.7 -18.0,-27.0 -16.3,-40.2 C-14.6,-50.0 -5.1,-51.0 0,-49.0 C5.1,-51.0 14.6,-50.0 16.3,-40.2 C18.0,-27.0 4.3,-14.7 0,0Z" transform="translate(365 368) rotate(86.0)"/><path d="M0,0 C-4.3,-14.7 -18.0,-27.0 -16.3,-40.2 C-14.6,-50.0 -5.1,-51.0 0,-49.0 C5.1,-51.0 14.6,-50.0 16.3,-40.2 C18.0,-27.0 4.3,-14.7 0,0Z" transform="translate(365 368) rotate(158.0)"/><path d="M0,0 C-4.3,-14.7 -18.0,-27.0 -16.3,-40.2 C-14.6,-50.0 -5.1,-51.0 0,-49.0 C5.1,-51.0 14.6,-50.0 16.3,-40.2 C18.0,-27.0 4.3,-14.7 0,0Z" transform="translate(365 368) rotate(230.0)"/><path d="M0,0 C-4.3,-14.7 -18.0,-27.0 -16.3,-40.2 C-14.6,-50.0 -5.1,-51.0 0,-49.0 C5.1,-51.0 14.6,-50.0 16.3,-40.2 C18.0,-27.0 4.3,-14.7 0,0Z" transform="translate(365 368) rotate(302.0)"/></g><g fill="#f1e4fd"><path d="M0,0 C-4.1,-9.6 -4.1,-16.8 0,-24 C4.1,-16.8 4.1,-9.6 0,0Z" transform="translate(365 368) rotate(5.0)"/><path d="M0,0 C-4.1,-9.6 -4.1,-16.8 0,-24 C4.1,-16.8 4.1,-9.6 0,0Z" transform="translate(365 368) rotate(41.0)"/><path d="M0,0 C-4.1,-9.6 -4.1,-16.8 0,-24 C4.1,-16.8 4.1,-9.6 0,0Z" transform="translate(365 368) rotate(77.0)"/><path d="M0,0 C-4.1,-9.6 -4.1,-16.8 0,-24 C4.1,-16.8 4.1,-9.6 0,0Z" transform="translate(365 368) rotate(113.0)"/><path d="M0,0 C-4.1,-9.6 -4.1,-16.8 0,-24 C4.1,-16.8 4.1,-9.6 0,0Z" transform="translate(365 368) rotate(149.0)"/><path d="M0,0 C-4.1,-9.6 -4.1,-16.8 0,-24 C4.1,-16.8 4.1,-9.6 0,0Z" transform="translate(365 368) rotate(185.0)"/><path d="M0,0 C-4.1,-9.6 -4.1,-16.8 0,-24 C4.1,-16.8 4.1,-9.6 0,0Z" transform="translate(365 368) rotate(221.0)"/><path d="M0,0 C-4.1,-9.6 -4.1,-16.8 0,-24 C4.1,-16.8 4.1,-9.6 0,0Z" transform="translate(365 368) rotate(257.0)"/><path d="M0,0 C-4.1,-9.6 -4.1,-16.8 0,-24 C4.1,-16.8 4.1,-9.6 0,0Z" transform="translate(365 368) rotate(293.0)"/><path d="M0,0 C-4.1,-9.6 -4.1,-16.8 0,-24 C4.1,-16.8 4.1,-9.6 0,0Z" transform="translate(365 368) rotate(329.0)"/></g><circle cx="365" cy="368" r="2.2" fill="#7a5aa1"/><circle cx="365" cy="368" r="1" fill="#fff"/><path d="M316,345 C310,325 318,308 333,298 C338,315 332,335 316,345Z" fill="#c6a6ea"/><path d="M316,345 C310,325 318,308 333,298 C338,315 332,335 316,345Z" fill="none" stroke="#3c2a5a" stroke-width="1" stroke-dasharray="0.8 2.2" stroke-linecap="round"/><path d="M302,468 C306,452 325,438 348,436 C342,452 325,466 302,468Z" fill="#c6a6ea"/><path d="M302,468 C306,452 325,438 348,436 C342,452 325,466 302,468Z" fill="none" stroke="#3c2a5a" stroke-width="1" stroke-dasharray="0.8 2.2" stroke-linecap="round"/><path d="M317,343 C320,325 326,310 333,299 M303,467 C318,456 332,446 347,437" fill="none" stroke="#3c2a5a" stroke-width="0.9" stroke-dasharray="0.8 2.4" stroke-linecap="round"/><g fill="none" stroke="#6c4b98" stroke-linecap="round"><path d="M386.8,467.0 L387.2,466.6 L387.6,466.2 L387.9,465.6 L388.1,464.9 L388.1,464.2 L388.1,463.4 L387.9,462.7 L387.5,461.9 L387.0,461.2 L386.3,460.5 L385.6,459.9 L384.6,459.4 L383.6,459.1 L382.5,459.0 L381.4,459.0 L380.2,459.2 L379.0,459.6 L377.9,460.2 L376.8,461.0 L375.9,462.1 L375.1,463.2 L374.5,464.6 L374.1,466.0 L373.9,467.6 L374.0,469.2 L374.3,470.8 L374.9,472.4 L375.7,473.9 L376.8,475.3 L378.2,476.5 L379.7,477.5 L381.5,478.3 L383.3,478.9 L385.3,479.1 L387.4,479.1 L389.4,478.7 L391.5,478.0 L393.4,476.9 L395.1,475.6 L396.7,473.9 L398.1,472.1 L399.1,469.9 L399.8,467.6 L400.2,465.2 L400.2,462.7 L399.8,460.2 L399.0,457.7 L397.8,455.4 L396.2,453.2 L394.3,451.3 L392.1,449.6 L389.6,448.3 L386.9,447.3 L384.1,446.8 L381.1,446.7 L378.1,447.1 L375.2,447.9 L372.4,449.2 L369.8,450.9 L367.5,453.1" stroke-width="3.2"/><path d="M425.1,477.3 L425.1,477.0 L425.1,476.6 L425.1,476.2 L425.3,475.9 L425.5,475.5 L425.8,475.2 L426.1,474.8 L426.5,474.6 L427.0,474.4 L427.5,474.2 L428.1,474.1 L428.7,474.2 L429.3,474.3 L429.9,474.5 L430.5,474.8 L431.0,475.2 L431.5,475.6 L432.0,476.2 L432.4,476.9 L432.7,477.6 L432.8,478.4 L432.9,479.2 L432.9,480.1 L432.7,480.9 L432.4,481.8 L432.0,482.6 L431.4,483.4 L430.7,484.1 L430.0,484.7 L429.1,485.2 L428.1,485.6 L427.1,485.9 L426.0,486.0 L424.8,485.9 L423.7,485.7 L422.6,485.4 L421.5,484.9 L420.5,484.2 L419.6,483.4 L418.8,482.4 L418.1,481.3 L417.5,480.1 L417.1,478.8 L416.9,477.4 L416.9,476.0 L417.1,474.6 L417.5,473.2 L418.1,471.9 L418.9,470.6 L419.8,469.4 L421.0,468.4 L422.2,467.5 L423.7,466.8 L425.2,466.2 L426.8,465.9 L428.5,465.8 L430.1,466.0 L431.8,466.3 L433.4,466.9 L435.0,467.8" stroke-width="2.6"/><path d="M402,452 C412,470 408,492 400,505 C396,512 392,518 388,524" stroke-width="3"/><path d="M412.0,507.0 L411.9,506.7 L411.8,506.4 L411.8,506.1 L411.8,505.8 L411.9,505.5 L412.0,505.2 L412.2,504.8 L412.4,504.5 L412.7,504.2 L413.0,504.0 L413.4,503.8 L413.8,503.6 L414.2,503.5 L414.7,503.4 L415.2,503.4 L415.6,503.5 L416.1,503.6 L416.6,503.8 L417.1,504.1 L417.5,504.5 L417.9,504.9 L418.2,505.3 L418.5,505.8 L418.8,506.4 L418.9,507.0 L419.0,507.6 L419.0,508.3 L418.9,508.9 L418.7,509.6 L418.4,510.2 L418.1,510.8 L417.7,511.4 L417.1,511.9 L416.5,512.4 L415.9,512.8 L415.2,513.1 L414.4,513.3 L413.6,513.4 L412.8,513.4 L411.9,513.3 L411.1,513.1 L410.3,512.8 L409.5,512.4 L408.8,511.9 L408.1,511.3 L407.5,510.5 L407.0,509.8 L406.6,508.9 L406.3,508.0 L406.2,507.0 L406.1,506.0 L406.2,505.0 L406.4,504.0 L406.7,503.0 L407.2,502.1 L407.8,501.2 L408.5,500.3 L409.3,499.6 L410.2,499.0 L411.2,498.4" stroke-width="2.2"/></g><g fill="none" stroke="#c9aef0" stroke-linecap="round" stroke-width="2.6"><path d="M304.0,357.0 L304.1,357.3 L304.2,357.7 L304.3,358.1 L304.2,358.5 L304.1,358.9 L303.9,359.3 L303.6,359.7 L303.3,360.1 L302.9,360.4 L302.4,360.6 L301.8,360.8 L301.3,360.9 L300.6,360.9 L300.0,360.8 L299.4,360.6 L298.7,360.3 L298.2,359.9 L297.6,359.4 L297.2,358.8 L296.8,358.1 L296.5,357.3 L296.4,356.5 L296.3,355.7 L296.4,354.8 L296.7,353.9 L297.0,353.1 L297.6,352.3 L298.2,351.5 L299.0,350.9 L299.8,350.3 L300.8,349.9 L301.8,349.7 L302.9,349.6 L304.1,349.6 L305.2,349.8 L306.3,350.2 L307.3,350.8 L308.3,351.6 L309.2,352.4 L309.9,353.5 L310.5,354.6 L310.9,355.9 L311.2,357.2 L311.2,358.6 L311.0,359.9 L310.7,361.3 L310.1,362.6 L309.3,363.8 L308.3,365.0 L307.2,365.9 L305.9,366.8 L304.4,367.4 L302.9,367.8 L301.3,368.0 L299.7,367.9 L298.0,367.6 L296.5,367.1 L294.9,366.3 L293.5,365.3 L292.3,364.1"/><path d="M273.0,345.0 L273.3,345.1 L273.6,345.1 L273.9,345.1 L274.2,345.1 L274.6,344.9 L274.9,344.8 L275.2,344.6 L275.5,344.3 L275.7,344.0 L275.9,343.6 L276.1,343.2 L276.2,342.8 L276.2,342.3 L276.2,341.9 L276.1,341.4 L276.0,340.9 L275.7,340.5 L275.4,340.1 L275.1,339.7 L274.6,339.3 L274.1,339.1 L273.6,338.8 L273.0,338.7 L272.4,338.6 L271.8,338.7 L271.2,338.8 L270.6,339.0 L270.0,339.2 L269.5,339.6 L269.0,340.1 L268.5,340.6 L268.1,341.2 L267.8,341.8 L267.6,342.5 L267.5,343.3 L267.5,344.0 L267.6,344.8 L267.8,345.6 L268.1,346.3 L268.5,347.0 L269.1,347.7 L269.7,348.2 L270.4,348.7 L271.2,349.1 L272.0,349.4 L272.9,349.6 L273.8,349.7 L274.7,349.6 L275.6,349.4 L276.5,349.1 L277.4,348.6 L278.1,348.0 L278.9,347.4 L279.5,346.6 L280.0,345.7 L280.4,344.7 L280.7,343.7 L280.8,342.7 L280.8,341.6 L280.6,340.5"/><path d="M258,357 C272,362 290,372 302,369 M262,384 C275,380 290,392 296,400"/><path d="M474.0,514.0 L474.1,514.3 L474.2,514.7 L474.2,515.0 L474.2,515.4 L474.0,515.8 L473.8,516.2 L473.6,516.6 L473.2,516.9 L472.8,517.2 L472.4,517.5 L471.8,517.6 L471.3,517.7 L470.7,517.7 L470.1,517.6 L469.5,517.4 L468.9,517.1 L468.4,516.8 L467.9,516.3 L467.5,515.7 L467.1,515.0 L466.9,514.3 L466.7,513.6 L466.7,512.8 L466.8,511.9 L467.0,511.1 L467.4,510.3 L467.9,509.6 L468.5,508.9 L469.2,508.3 L470.0,507.8 L470.9,507.4 L471.9,507.2 L472.9,507.1 L473.9,507.2 L474.9,507.4 L476.0,507.8 L476.9,508.3 L477.8,509.0 L478.6,509.8 L479.3,510.7 L479.8,511.8 L480.2,513.0 L480.4,514.2 L480.5,515.4 L480.3,516.7 L480.0,518.0 L479.4,519.2 L478.7,520.3 L477.8,521.3 L476.8,522.2 L475.6,523.0 L474.2,523.5 L472.8,523.9 L471.4,524.1 L469.9,524.0 L468.4,523.7 L466.9,523.2 L465.5,522.5 L464.2,521.6 L463.1,520.5"/><path d="M454.0,538.0 L454.1,537.7 L454.1,537.4 L454.1,537.1 L454.0,536.8 L453.9,536.5 L453.7,536.2 L453.5,535.9 L453.2,535.6 L452.9,535.4 L452.6,535.2 L452.2,535.1 L451.8,535.0 L451.4,535.0 L451.0,535.0 L450.5,535.1 L450.1,535.3 L449.7,535.5 L449.3,535.8 L449.0,536.1 L448.7,536.5 L448.4,537.0 L448.2,537.4 L448.1,538.0 L448.0,538.5 L448.1,539.1 L448.2,539.6 L448.3,540.2 L448.6,540.7 L448.9,541.2 L449.4,541.6 L449.8,542.0 L450.4,542.4 L451.0,542.6 L451.6,542.8 L452.3,542.9 L452.9,542.9 L453.6,542.8 L454.3,542.6 L455.0,542.3 L455.6,542.0 L456.1,541.5 L456.6,540.9 L457.1,540.3 L457.4,539.6 L457.7,538.9 L457.8,538.1 L457.9,537.3 L457.8,536.5 L457.6,535.7 L457.3,534.9 L456.9,534.2 L456.4,533.5 L455.8,532.8 L455.1,532.3 L454.4,531.9 L453.5,531.5 L452.6,531.3 L451.7,531.2 L450.8,531.2 L449.8,531.3"/><path d="M483,520 C480,540 470,552 458,566 M497,500 C492,515 488,530 470,548"/><path d="M500.0,553.0 L500.1,553.3 L500.2,553.6 L500.2,553.9 L500.1,554.3 L500.0,554.6 L499.8,555.0 L499.6,555.3 L499.4,555.6 L499.0,555.9 L498.7,556.1 L498.2,556.3 L497.8,556.4 L497.3,556.4 L496.8,556.4 L496.3,556.3 L495.8,556.2 L495.3,555.9 L494.8,555.6 L494.4,555.2 L494.0,554.8 L493.7,554.2 L493.5,553.7 L493.3,553.0 L493.2,552.4 L493.3,551.7 L493.4,551.0 L493.6,550.4 L493.9,549.7 L494.3,549.1 L494.8,548.6 L495.3,548.1 L496.0,547.6 L496.7,547.3 L497.5,547.1 L498.3,546.9 L499.2,546.9 L500.0,547.0 L500.9,547.2 L501.7,547.6 L502.5,548.0 L503.2,548.6 L503.8,549.3 L504.4,550.1 L504.8,550.9 L505.2,551.9 L505.4,552.8 L505.4,553.9 L505.4,554.9 L505.1,555.9 L504.8,556.9 L504.3,557.9 L503.6,558.8 L502.9,559.6 L502.0,560.3 L501.0,560.9 L499.9,561.3 L498.8,561.6 L497.6,561.8 L496.4,561.7 L495.2,561.6"/></g><g fill="#efe1fd" stroke="#7a5aa1" stroke-width="1.5" stroke-linejoin="round"><path d="M504,380 C500,350 480,330 452,318 C446,316 441,316 440,320 C442,330 452,340 470,352 C485,362 496,372 504,380Z"/><path d="M504,380 C492,362 478,346 462,338 C452,333 440,333 432,337 C425,340 420,346 418,353 C413,357 411,363 413,368 C409,372 408,378 410,383 C407,388 408,394 413,398 C418,406 428,412 438,413 C455,412 475,400 504,380Z"/><path d="M504,380 C480,395 455,408 440,420 C432,428 432,440 436,450 C440,460 452,466 464,468 C472,469 478,466 482,460 C488,464 498,466 506,462 C514,456 520,440 518,420 C516,402 510,390 504,380Z"/></g><path d="M413,368 l6,-2 M410,383 l6,-1 M440,436 l5,10 M444,434 l4,9 M486,448 l-3,10 M490,450 l-2,9" stroke="#7a5aa1" stroke-width="1" fill="none"/><path d="M510.0,380.0 Q522.0,383.0 534.0,380.0M509.9,378.8 Q531.3,376.1 547.1,371.2M509.5,377.7 Q535.5,365.3 557.4,357.3M509.2,377.0 Q520.4,367.1 533.8,362.8M508.5,376.0 Q520.3,362.9 538.2,349.8M507.6,375.2 Q514.9,367.0 524.2,353.2M507.0,374.8 Q518.8,360.2 526.4,341.2M505.9,374.3 Q512.9,360.5 514.4,348.9M504.7,374.0 Q507.6,346.7 510.7,325.4M504.0,374.0 Q501.3,355.8 504.0,340.0M502.8,374.1 Q495.9,352.7 493.2,327.1M501.7,374.5 Q496.4,362.0 488.8,344.1M501.0,374.8 Q492.2,354.6 477.5,334.1M500.0,375.5 Q490.6,360.8 478.8,351.5M499.2,376.4 Q478.7,360.4 462.5,348.7M498.8,377.0 Q482.6,370.2 472.0,361.5M498.3,378.1 Q476.9,374.0 455.6,363.8M498.0,379.3 Q485.9,378.6 468.3,375.6M498.0,380.0 Q478.3,378.0 454.0,380.0M498.1,381.2 Q482.9,381.3 469.7,387.0M498.5,382.3 Q475.7,390.7 458.9,399.1M498.8,383.0 Q485.3,392.7 474.6,397.0M499.5,384.0 Q485.8,400.1 468.1,411.8M500.4,384.8 Q495.1,394.5 484.1,406.4M501.0,385.2 Q491.0,400.0 480.5,420.7M502.1,385.7 Q495.3,396.7 493.8,410.3M503.3,386.0 Q498.6,407.8 498.4,425.7M504.0,386.0 Q504.9,401.4 504.0,411.0M505.2,385.9 Q512.1,405.2 513.0,424.1M506.3,385.5 Q512.3,393.9 515.7,407.6M507.0,385.2 Q514.6,399.3 526.0,418.1M508.0,384.5 Q522.3,404.9 542.4,423.4M508.8,383.6 Q523.4,397.7 538.3,405.9M509.2,383.0 Q533.9,397.2 553.4,408.5M509.7,381.9 Q529.1,385.7 543.8,393.3M510.0,380.7 Q533.8,380.9 559.6,386.8" stroke="#a689cf" stroke-width="1.7" fill="none" stroke-linecap="round" opacity="0.85"/><ellipse cx="503" cy="380" rx="15" ry="10" fill="#c3a3e8" opacity="0.85" transform="rotate(-30 503 380)"/><path d="M505,384 C503,365 498,348 492,334" stroke="#b393dc" stroke-width="3.4" fill="none" stroke-linecap="round"/><path d="M503,390 C498,380 500,368 503,362 C506,370 508,382 503,390Z" fill="#cdb0ee"/><circle cx="483" cy="310" r="3.5" fill="#c9aaec" stroke="#a17fcf" stroke-width="0.9"/><circle cx="490" cy="314" r="3.5" fill="#c9aaec" stroke="#a17fcf" stroke-width="0.9"/><circle cx="481" cy="319" r="3.5" fill="#c9aaec" stroke="#a17fcf" stroke-width="0.9"/><circle cx="488" cy="322" r="3.5" fill="#c9aaec" stroke="#a17fcf" stroke-width="0.9"/><circle cx="496" cy="320" r="3.5" fill="#c9aaec" stroke="#a17fcf" stroke-width="0.9"/><circle cx="486" cy="328" r="3.5" fill="#c9aaec" stroke="#a17fcf" stroke-width="0.9"/><circle cx="494" cy="329" r="3.5" fill="#c9aaec" stroke="#a17fcf" stroke-width="0.9"/><circle cx="501" cy="328" r="3.5" fill="#c9aaec" stroke="#a17fcf" stroke-width="0.9"/><circle cx="490" cy="335" r="3.5" fill="#c9aaec" stroke="#a17fcf" stroke-width="0.9"/><g transform="translate(428.6 601.6) rotate(-15)"><path d="M0,-16 C-8.049999999999999,-26 -13.0,-45 -6.325,-63 C-3.4499999999999997,-70 -1.5,-74 0,-75 C1.5,-74 3.4499999999999997,-70 6.325,-63 C13.0,-45 8.049999999999999,-26 0,-16Z" fill="url(#petg)"/><path d="M0,-16 C-8.049999999999999,-26 -13.0,-45 -6.325,-63 C-3.4499999999999997,-70 -1.5,-74 0,-75 C1.5,-74 3.4499999999999997,-70 6.325,-63 C13.0,-45 8.049999999999999,-26 0,-16Z" fill="none" stroke="#46325f" stroke-width="1.05" stroke-dasharray="0.9 2.1" stroke-linecap="round" opacity="0.85"/><path d="M0,-25 C-7.0,-32 -8.5,-45 0,-65 C8.5,-45 7.0,-32 0,-25Z" fill="none" stroke="#5a4482" stroke-width="0.95" stroke-dasharray="0.8 2.3" stroke-linecap="round" opacity="0.8"/></g><g transform="translate(428.6 601.6) rotate(45)"><path d="M0,-16 C-8.049999999999999,-26 -13.0,-45 -6.325,-63 C-3.4499999999999997,-70 -1.5,-74 0,-75 C1.5,-74 3.4499999999999997,-70 6.325,-63 C13.0,-45 8.049999999999999,-26 0,-16Z" fill="url(#petg)"/><path d="M0,-16 C-8.049999999999999,-26 -13.0,-45 -6.325,-63 C-3.4499999999999997,-70 -1.5,-74 0,-75 C1.5,-74 3.4499999999999997,-70 6.325,-63 C13.0,-45 8.049999999999999,-26 0,-16Z" fill="none" stroke="#46325f" stroke-width="1.05" stroke-dasharray="0.9 2.1" stroke-linecap="round" opacity="0.85"/><path d="M0,-25 C-7.0,-32 -8.5,-45 0,-65 C8.5,-45 7.0,-32 0,-25Z" fill="none" stroke="#5a4482" stroke-width="0.95" stroke-dasharray="0.8 2.3" stroke-linecap="round" opacity="0.8"/></g><g transform="translate(428.6 601.6) rotate(105)"><path d="M0,-16 C-8.049999999999999,-26 -13.0,-45 -6.325,-63 C-3.4499999999999997,-70 -1.5,-74 0,-75 C1.5,-74 3.4499999999999997,-70 6.325,-63 C13.0,-45 8.049999999999999,-26 0,-16Z" fill="url(#petg)"/><path d="M0,-16 C-8.049999999999999,-26 -13.0,-45 -6.325,-63 C-3.4499999999999997,-70 -1.5,-74 0,-75 C1.5,-74 3.4499999999999997,-70 6.325,-63 C13.0,-45 8.049999999999999,-26 0,-16Z" fill="none" stroke="#46325f" stroke-width="1.05" stroke-dasharray="0.9 2.1" stroke-linecap="round" opacity="0.85"/><path d="M0,-25 C-7.0,-32 -8.5,-45 0,-65 C8.5,-45 7.0,-32 0,-25Z" fill="none" stroke="#5a4482" stroke-width="0.95" stroke-dasharray="0.8 2.3" stroke-linecap="round" opacity="0.8"/></g><g transform="translate(428.6 601.6) rotate(165)"><path d="M0,-16 C-8.049999999999999,-26 -13.0,-45 -6.325,-63 C-3.4499999999999997,-70 -1.5,-74 0,-75 C1.5,-74 3.4499999999999997,-70 6.325,-63 C13.0,-45 8.049999999999999,-26 0,-16Z" fill="url(#petg)"/><path d="M0,-16 C-8.049999999999999,-26 -13.0,-45 -6.325,-63 C-3.4499999999999997,-70 -1.5,-74 0,-75 C1.5,-74 3.4499999999999997,-70 6.325,-63 C13.0,-45 8.049999999999999,-26 0,-16Z" fill="none" stroke="#46325f" stroke-width="1.05" stroke-dasharray="0.9 2.1" stroke-linecap="round" opacity="0.85"/><path d="M0,-25 C-7.0,-32 -8.5,-45 0,-65 C8.5,-45 7.0,-32 0,-25Z" fill="none" stroke="#5a4482" stroke-width="0.95" stroke-dasharray="0.8 2.3" stroke-linecap="round" opacity="0.8"/></g><g transform="translate(428.6 601.6) rotate(225)"><path d="M0,-16 C-8.049999999999999,-26 -13.0,-45 -6.325,-63 C-3.4499999999999997,-70 -1.5,-74 0,-75 C1.5,-74 3.4499999999999997,-70 6.325,-63 C13.0,-45 8.049999999999999,-26 0,-16Z" fill="url(#petg)"/><path d="M0,-16 C-8.049999999999999,-26 -13.0,-45 -6.325,-63 C-3.4499999999999997,-70 -1.5,-74 0,-75 C1.5,-74 3.4499999999999997,-70 6.325,-63 C13.0,-45 8.049999999999999,-26 0,-16Z" fill="none" stroke="#46325f" stroke-width="1.05" stroke-dasharray="0.9 2.1" stroke-linecap="round" opacity="0.85"/><path d="M0,-25 C-7.0,-32 -8.5,-45 0,-65 C8.5,-45 7.0,-32 0,-25Z" fill="none" stroke="#5a4482" stroke-width="0.95" stroke-dasharray="0.8 2.3" stroke-linecap="round" opacity="0.8"/></g><g transform="translate(428.6 601.6) rotate(285)"><path d="M0,-16 C-8.049999999999999,-26 -13.0,-45 -6.325,-63 C-3.4499999999999997,-70 -1.5,-74 0,-75 C1.5,-74 3.4499999999999997,-70 6.325,-63 C13.0,-45 8.049999999999999,-26 0,-16Z" fill="url(#petg)"/><path d="M0,-16 C-8.049999999999999,-26 -13.0,-45 -6.325,-63 C-3.4499999999999997,-70 -1.5,-74 0,-75 C1.5,-74 3.4499999999999997,-70 6.325,-63 C13.0,-45 8.049999999999999,-26 0,-16Z" fill="none" stroke="#46325f" stroke-width="1.05" stroke-dasharray="0.9 2.1" stroke-linecap="round" opacity="0.85"/><path d="M0,-25 C-7.0,-32 -8.5,-45 0,-65 C8.5,-45 7.0,-32 0,-25Z" fill="none" stroke="#5a4482" stroke-width="0.95" stroke-dasharray="0.8 2.3" stroke-linecap="round" opacity="0.8"/></g><g transform="translate(428.6 601.6) rotate(8)"><path d="M0,-16 C-8.049999999999999,-26 -13.0,-45 -6.325,-63 C-3.4499999999999997,-70 -1.5,-74 0,-75 C1.5,-74 3.4499999999999997,-70 6.325,-63 C13.0,-45 8.049999999999999,-26 0,-16Z" fill="url(#petg2)"/><path d="M0,-16 C-8.049999999999999,-26 -13.0,-45 -6.325,-63 C-3.4499999999999997,-70 -1.5,-74 0,-75 C1.5,-74 3.4499999999999997,-70 6.325,-63 C13.0,-45 8.049999999999999,-26 0,-16Z" fill="none" stroke="#46325f" stroke-width="1.05" stroke-dasharray="0.9 2.1" stroke-linecap="round" opacity="0.85"/><path d="M0,-25 C-7.0,-32 -8.5,-45 0,-65 C8.5,-45 7.0,-32 0,-25Z" fill="none" stroke="#5a4482" stroke-width="0.95" stroke-dasharray="0.8 2.3" stroke-linecap="round" opacity="0.8"/></g><g transform="translate(428.6 601.6) rotate(68)"><path d="M0,-16 C-8.049999999999999,-26 -13.0,-45 -6.325,-63 C-3.4499999999999997,-70 -1.5,-74 0,-75 C1.5,-74 3.4499999999999997,-70 6.325,-63 C13.0,-45 8.049999999999999,-26 0,-16Z" fill="url(#petg2)"/><path d="M0,-16 C-8.049999999999999,-26 -13.0,-45 -6.325,-63 C-3.4499999999999997,-70 -1.5,-74 0,-75 C1.5,-74 3.4499999999999997,-70 6.325,-63 C13.0,-45 8.049999999999999,-26 0,-16Z" fill="none" stroke="#46325f" stroke-width="1.05" stroke-dasharray="0.9 2.1" stroke-linecap="round" opacity="0.85"/><path d="M0,-25 C-7.0,-32 -8.5,-45 0,-65 C8.5,-45 7.0,-32 0,-25Z" fill="none" stroke="#5a4482" stroke-width="0.95" stroke-dasharray="0.8 2.3" stroke-linecap="round" opacity="0.8"/></g><g transform="translate(428.6 601.6) rotate(128)"><path d="M0,-16 C-8.049999999999999,-26 -13.0,-45 -6.325,-63 C-3.4499999999999997,-70 -1.5,-74 0,-75 C1.5,-74 3.4499999999999997,-70 6.325,-63 C13.0,-45 8.049999999999999,-26 0,-16Z" fill="url(#petg2)"/><path d="M0,-16 C-8.049999999999999,-26 -13.0,-45 -6.325,-63 C-3.4499999999999997,-70 -1.5,-74 0,-75 C1.5,-74 3.4499999999999997,-70 6.325,-63 C13.0,-45 8.049999999999999,-26 0,-16Z" fill="none" stroke="#46325f" stroke-width="1.05" stroke-dasharray="0.9 2.1" stroke-linecap="round" opacity="0.85"/><path d="M0,-25 C-7.0,-32 -8.5,-45 0,-65 C8.5,-45 7.0,-32 0,-25Z" fill="none" stroke="#5a4482" stroke-width="0.95" stroke-dasharray="0.8 2.3" stroke-linecap="round" opacity="0.8"/></g><g transform="translate(428.6 601.6) rotate(188)"><path d="M0,-16 C-8.049999999999999,-26 -13.0,-45 -6.325,-63 C-3.4499999999999997,-70 -1.5,-74 0,-75 C1.5,-74 3.4499999999999997,-70 6.325,-63 C13.0,-45 8.049999999999999,-26 0,-16Z" fill="url(#petg2)"/><path d="M0,-16 C-8.049999999999999,-26 -13.0,-45 -6.325,-63 C-3.4499999999999997,-70 -1.5,-74 0,-75 C1.5,-74 3.4499999999999997,-70 6.325,-63 C13.0,-45 8.049999999999999,-26 0,-16Z" fill="none" stroke="#46325f" stroke-width="1.05" stroke-dasharray="0.9 2.1" stroke-linecap="round" opacity="0.85"/><path d="M0,-25 C-7.0,-32 -8.5,-45 0,-65 C8.5,-45 7.0,-32 0,-25Z" fill="none" stroke="#5a4482" stroke-width="0.95" stroke-dasharray="0.8 2.3" stroke-linecap="round" opacity="0.8"/></g><g transform="translate(428.6 601.6) rotate(248)"><path d="M0,-16 C-8.049999999999999,-26 -13.0,-45 -6.325,-63 C-3.4499999999999997,-70 -1.5,-74 0,-75 C1.5,-74 3.4499999999999997,-70 6.325,-63 C13.0,-45 8.049999999999999,-26 0,-16Z" fill="url(#petg2)"/><path d="M0,-16 C-8.049999999999999,-26 -13.0,-45 -6.325,-63 C-3.4499999999999997,-70 -1.5,-74 0,-75 C1.5,-74 3.4499999999999997,-70 6.325,-63 C13.0,-45 8.049999999999999,-26 0,-16Z" fill="none" stroke="#46325f" stroke-width="1.05" stroke-dasharray="0.9 2.1" stroke-linecap="round" opacity="0.85"/><path d="M0,-25 C-7.0,-32 -8.5,-45 0,-65 C8.5,-45 7.0,-32 0,-25Z" fill="none" stroke="#5a4482" stroke-width="0.95" stroke-dasharray="0.8 2.3" stroke-linecap="round" opacity="0.8"/></g><g transform="translate(428.6 601.6) rotate(308)"><path d="M0,-16 C-8.049999999999999,-26 -13.0,-45 -6.325,-63 C-3.4499999999999997,-70 -1.5,-74 0,-75 C1.5,-74 3.4499999999999997,-70 6.325,-63 C13.0,-45 8.049999999999999,-26 0,-16Z" fill="url(#petg2)"/><path d="M0,-16 C-8.049999999999999,-26 -13.0,-45 -6.325,-63 C-3.4499999999999997,-70 -1.5,-74 0,-75 C1.5,-74 3.4499999999999997,-70 6.325,-63 C13.0,-45 8.049999999999999,-26 0,-16Z" fill="none" stroke="#46325f" stroke-width="1.05" stroke-dasharray="0.9 2.1" stroke-linecap="round" opacity="0.85"/><path d="M0,-25 C-7.0,-32 -8.5,-45 0,-65 C8.5,-45 7.0,-32 0,-25Z" fill="none" stroke="#5a4482" stroke-width="0.95" stroke-dasharray="0.8 2.3" stroke-linecap="round" opacity="0.8"/></g><circle cx="428.6" cy="601.6" r="21.8" fill="url(#discg)"/><polyline points="430.0,603.7 429.7,604.0 429.4,604.2 429.0,604.4 428.6,604.5 428.2,604.6 427.7,604.6 427.2,604.6 426.7,604.4 426.3,604.2 425.9,603.9 425.5,603.6 425.1,603.2 424.8,602.7 424.6,602.1 424.4,601.5 424.4,600.9 424.4,600.3 424.5,599.7 424.8,599.0 425.1,598.5 425.5,597.9 426.0,597.4 426.6,597.0 427.2,596.6 428.0,596.4 428.7,596.2 429.5,596.2 430.3,596.3 431.1,596.5 431.9,596.8 432.6,597.2 433.3,597.8 433.9,598.4 434.4,599.2 434.8,600.0 435.0,600.9 435.2,601.8 435.2,602.8 435.1,603.7 434.8,604.7 434.4,605.6 433.8,606.5 433.2,607.3 432.4,607.9 431.5,608.5 430.5,609.0 429.4,609.3 428.3,609.4 427.2,609.4 426.0,609.2 424.9,608.9 423.8,608.3 422.8,607.7 422.0,606.9 421.2,605.9 420.5,604.8 420.0,603.7 419.7,602.4 419.6,601.2 419.6,599.9 419.9,598.6 420.3,597.3 420.9,596.1 421.7,595.0 422.7,593.9 423.8,593.1 425.0,592.4 426.3,591.8 427.7,591.5 429.2,591.4 430.7,591.4 432.1,591.7 433.6,592.3 434.9,593.0 436.2,593.9 437.3,595.0 438.2,596.2 439.0,597.6 439.6,599.1 439.9,600.7 440.0,602.4 439.9,604.0 439.6,605.6 439.0,607.2 438.1,608.7 437.1,610.1 435.9,611.3 434.5,612.4 432.9,613.2 431.2,613.8 429.5,614.1 427.6,614.2 425.8,614.1 424.0,613.7 422.3,613.0 420.7,612.1 419.2,610.9 417.8,609.5 416.7,607.9 415.8,606.2 415.2,604.4 414.8,602.4 414.7,600.4 414.9,598.4 415.4,596.5 416.2,594.6 417.3,592.8 418.6,591.2 420.1,589.8 421.8,588.6 423.7,587.6 425.7,587.0 427.8,586.6 430.0,586.5 432.2,586.8 434.3,587.4 436.3,588.2 438.2,589.4 440.0,590.8 441.5,592.5 442.8,594.4 443.8,596.4 444.4,598.6 444.8,600.9 444.9,603.3 444.6,605.6 443.9,607.9 443.0,610.1 441.7,612.1 440.1,614.0 438.3,615.6 436.2,616.9 434.0,618.0 431.6,618.7 429.2,619.0 426.6,619.0 424.1,618.7 421.7,618.0 419.4,616.9" fill="none" stroke="#5a4482" stroke-width="1" stroke-dasharray="0.8 2.2" stroke-linecap="round" opacity="0.85"/><circle cx="428.6" cy="601.6" r="20.6" fill="none" stroke="#5a4482" stroke-width="1" stroke-dasharray="0.8 2.2" stroke-linecap="round" opacity="0.85"/><g fill="none" stroke="#6c4b98" stroke-width="1.6" stroke-linecap="round"><path d="M296,600 C320,610 345,625 352,650 C358,670 350,685 340,690 M300,640 C310,650 318,665 316,680"/><path d="M494.0,672.0 L494.1,671.7 L494.2,671.4 L494.3,671.0 L494.3,670.6 L494.2,670.2 L494.1,669.8 L493.8,669.4 L493.5,669.0 L493.2,668.7 L492.8,668.4 L492.3,668.2 L491.7,668.0 L491.2,667.9 L490.6,667.9 L490.0,668.0 L489.3,668.2 L488.7,668.4 L488.1,668.8 L487.6,669.3 L487.1,669.8 L486.7,670.5 L486.4,671.2 L486.2,671.9 L486.0,672.8 L486.0,673.6 L486.2,674.5 L486.4,675.3 L486.8,676.1 L487.3,676.9 L487.9,677.7 L488.6,678.3 L489.4,678.9 L490.4,679.3 L491.4,679.6 L492.4,679.8 L493.5,679.9 L494.6,679.7 L495.7,679.5 L496.8,679.0 L497.8,678.4 L498.7,677.7 L499.6,676.8 L500.3,675.8 L500.9,674.7 L501.4,673.5 L501.7,672.2 L501.8,670.9 L501.7,669.5 L501.4,668.2 L500.9,666.8 L500.3,665.6 L499.5,664.4 L498.5,663.3 L497.3,662.4 L496.0,661.6 L494.6,661.0 L493.1,660.6 L491.5,660.3 L489.9,660.4 L488.3,660.6"/><path d="M470,690 C480,680 490,684 500,690"/></g><path fill="rgba(62,22,122,0.50)" d="M270,436 L297,440 C300,460 305,472 313,478 C322,484 340,487 362,490 C378,494 392,500 397,510 C400,522 396,540 388,548 C380,554 372,560 366,568 C356,582 351,600 350,625 C350,645 358,660 372,664 C430,668 480,650 497,618 C505,600 507,575 505,548 C503,525 498,508 496,490 C500,487 504,486 507,486 C506,470 512,455 520,440 L545,436 L545,705 L265,705 Z"/><path fill="rgba(62,22,122,0.50)" d="M462,481 C478,476 496,476 512,482 L509,494 C496,490 480,486 462,481Z"/><g fill="#e9d8fa"><path d="M313,500 C316,494 326,493 333,497 C337,501 335,509 329,512 C322,514 314,510 313,500Z"/><path d="M364,546 C371,546 375,553 370,558 L324,588 C317,592 309,587 310,579 C311,574 314,571 318,569 Z"/><path d="M338,590 C346,584 356,588 354,598 L341,648 C337,660 324,660 323,648 C322,628 328,605 338,590Z"/></g><g fill="url(#f2g)" opacity="0.88" ><path d="M0,0 C-4.4,-15.6 -18.6,-28.6 -16.8,-42.6 C-15.0,-53.0 -5.3,-54.1 0,-52.0 C5.3,-54.1 15.0,-53.0 16.8,-42.6 C18.6,-28.6 4.4,-15.6 0,0Z" transform="translate(351 531) rotate(-22.0)"/><path d="M0,0 C-4.4,-15.6 -18.6,-28.6 -16.8,-42.6 C-15.0,-53.0 -5.3,-54.1 0,-52.0 C5.3,-54.1 15.0,-53.0 16.8,-42.6 C18.6,-28.6 4.4,-15.6 0,0Z" transform="translate(351 531) rotate(50.0)"/><path d="M0,0 C-4.4,-15.6 -18.6,-28.6 -16.8,-42.6 C-15.0,-53.0 -5.3,-54.1 0,-52.0 C5.3,-54.1 15.0,-53.0 16.8,-42.6 C18.6,-28.6 4.4,-15.6 0,0Z" transform="translate(351 531) rotate(122.0)"/><path d="M0,0 C-4.4,-15.6 -18.6,-28.6 -16.8,-42.6 C-15.0,-53.0 -5.3,-54.1 0,-52.0 C5.3,-54.1 15.0,-53.0 16.8,-42.6 C18.6,-28.6 4.4,-15.6 0,0Z" transform="translate(351 531) rotate(194.0)"/><path d="M0,0 C-4.4,-15.6 -18.6,-28.6 -16.8,-42.6 C-15.0,-53.0 -5.3,-54.1 0,-52.0 C5.3,-54.1 15.0,-53.0 16.8,-42.6 C18.6,-28.6 4.4,-15.6 0,0Z" transform="translate(351 531) rotate(266.0)"/></g><g fill="#eadbfb"><path d="M0,0 C-3.5,-10.8 -3.5,-18.9 0,-27 C3.5,-18.9 3.5,-10.8 0,0Z" transform="translate(351 531) rotate(0.0)"/><path d="M0,0 C-3.5,-10.8 -3.5,-18.9 0,-27 C3.5,-18.9 3.5,-10.8 0,0Z" transform="translate(351 531) rotate(30.0)"/><path d="M0,0 C-3.5,-10.8 -3.5,-18.9 0,-27 C3.5,-18.9 3.5,-10.8 0,0Z" transform="translate(351 531) rotate(60.0)"/><path d="M0,0 C-3.5,-10.8 -3.5,-18.9 0,-27 C3.5,-18.9 3.5,-10.8 0,0Z" transform="translate(351 531) rotate(90.0)"/><path d="M0,0 C-3.5,-10.8 -3.5,-18.9 0,-27 C3.5,-18.9 3.5,-10.8 0,0Z" transform="translate(351 531) rotate(120.0)"/><path d="M0,0 C-3.5,-10.8 -3.5,-18.9 0,-27 C3.5,-18.9 3.5,-10.8 0,0Z" transform="translate(351 531) rotate(150.0)"/><path d="M0,0 C-3.5,-10.8 -3.5,-18.9 0,-27 C3.5,-18.9 3.5,-10.8 0,0Z" transform="translate(351 531) rotate(180.0)"/><path d="M0,0 C-3.5,-10.8 -3.5,-18.9 0,-27 C3.5,-18.9 3.5,-10.8 0,0Z" transform="translate(351 531) rotate(210.0)"/><path d="M0,0 C-3.5,-10.8 -3.5,-18.9 0,-27 C3.5,-18.9 3.5,-10.8 0,0Z" transform="translate(351 531) rotate(240.0)"/><path d="M0,0 C-3.5,-10.8 -3.5,-18.9 0,-27 C3.5,-18.9 3.5,-10.8 0,0Z" transform="translate(351 531) rotate(270.0)"/><path d="M0,0 C-3.5,-10.8 -3.5,-18.9 0,-27 C3.5,-18.9 3.5,-10.8 0,0Z" transform="translate(351 531) rotate(300.0)"/><path d="M0,0 C-3.5,-10.8 -3.5,-18.9 0,-27 C3.5,-18.9 3.5,-10.8 0,0Z" transform="translate(351 531) rotate(330.0)"/></g><path fill="rgba(62,22,122,0.50)" d="M283,330 C285,345 283,365 281,380 C282,395 284,410 286,424 L288,438 L308,428 C301,416 296,400 294,380 C292,360 288,345 283,330Z"/><path fill="rgba(62,22,122,0.50)" d="M294,387 C302,384 310,376 319,365 C313,380 305,391 296,399Z"/><path fill="rgba(62,22,122,0.50)" d="M268,366 C275,372 280,388 280,404 C272,396 267,380 268,366Z"/><path fill="rgba(62,22,122,0.50)" d="M236,400 L247,381 C246,394 250,402 258,407 L289,421 L286,432 L236,410Z"/><path fill="none" stroke="rgba(62,22,122,0.50)" stroke-width="3.5" d="M253,383 C251,400 263,412 284,418"/><path fill="#3a2072" opacity="0.88" d="M288,368 C290.5,385 293,398 295,408 L300,404 C298.5,412 299,420 302,428 L304,440 L289,434 C288.5,412 288,390 288,368Z"/><path fill="rgba(62,22,122,0.50)" d="M286,430 L308,428 C308,440 312,452 316,462 C312,470 312,476 313,480 L296,480Z"/><path fill="rgba(62,22,122,0.50)" d="M536,342 C532,358 524,366 510,363 C520,370 526,380 524,395 C520,408 514,420 512,434 L532,430 C534,415 540,400 544,385 C547,378 550,372 551,366 C548,368 545,370 543,368 C540,360 538,350 536,342Z"/><path fill="rgba(62,22,122,0.50)" d="M576,398 L576,414 L528,432 L524,424 C534,416 540,412 544,408 C556,408 566,404 576,398Z"/><path fill="#3a2072" opacity="0.85" d="M535,374 C535.5,392 531,412 524,430 L519,438 L516,436 C524,420 531,398 535,374Z"/><path fill="rgba(62,22,122,0.50)" d="M530,426 L510,432 C510,448 508,462 502,474 L500,486 L516,484 C520,470 524,450 530,426Z"/><path fill="none" stroke="#3a2072" stroke-width="8" stroke-linecap="round" opacity="0.9" d="M287,432 C288,447 291,460 296,478 C298,490 302,505 303,527"/><path fill="none" stroke="#3a2072" stroke-width="8" opacity="0.8" d="M302,527 C302,560 298,585 292,605 C287,625 282,650 280,668"/><path fill="none" stroke="#3a2072" stroke-width="6" stroke-linecap="round" opacity="0.85" d="M527,430 C524,436 524,445 523,455 C521,468 517,474 513,482"/><path fill="none" stroke="#3a2072" stroke-width="5" opacity="0.8" d="M508,535 C510,560 518,585 522,605 C526,630 529,650 532,669"/><path fill="none" stroke="#3a2072" stroke-width="2.6" opacity="0.6" d="M284,662 C320,676 360,682 392,682 C440,682 500,674 530,662"/><path fill="none" stroke="#3c2a5a" stroke-width="1" stroke-dasharray="0.8 2.2" stroke-linecap="round" d="M496,490 C498,508 503,525 505,548 C507,575 505,600 497,618"/><path d="M333,299 C340,314 370,322 405,322 C440,322 468,314 477,297 C470,284 440,277 405,277 C370,277 338,286 333,299Z" fill="#eadafa" opacity="0.28"/><ellipse cx="405" cy="294.5" rx="63" ry="13.6" fill="url(#colg)" opacity="0.42"/><path d="M352,288 C365,282 385,280.5 405,280.5 C428,280.5 448,283 460,288 C446,286 425,285.5 405,285.5 C384,285.5 364,286 352,288Z" fill="#f3e8fe" opacity="0.85"/><ellipse cx="405" cy="294.5" rx="63" ry="13.6" fill="none" stroke="#4a2c8a" stroke-width="3.6"/><path d="M333,303 C340,314 368,322 405,322 C442,322 470,313 477,300" fill="none" stroke="#4a2c8a" stroke-width="3"/><path d="M337,297 C338,308 368,315.5 405,315.5 C442,315.5 471,308 473,296" fill="none" stroke="#8a6cc0" stroke-width="1.6" opacity="0.55"/></g><path d="M342,286 C360,279 380,277 400,277 C425,277 445,279 460,283 L475,293 C500,305 525,315 545,325 C550,328 552,334 553,340 L574,403 C575,407 575,410 573,412 L531,428 C526,431 524,436 524,445 C523,460 519,470 513,480 C507,500 506,520 508,535 C510,560 518,585 522,605 C526,630 529,650 532,669 C500,682 440,692 392,692.5 C350,692 310,682 281,668 C283,650 288,625 293,605 C299,585 303,560 303,527 C302,505 298,490 296,478 C291,460 289,447 288,436 C288,432 287,429 284,428 L238,407 C237,405 237,403 238,401 L259,340 C260,333 262,328 267,325 C295,312 318,302 334,292 Z" fill="none" stroke="#2a2233" stroke-width="2.15" stroke-linecap="round" stroke-dasharray="0.1 5.3"/></svg>
<div id="t1" class="abs" style="left:605.3px;top:363px;font-family:'Liberation Sans',sans-serif;font-weight:bold;font-size:37.2px;line-height:44px;color:#4bb4b9;white-space:nowrap;transform-origin:0 0;transform:scaleX(0.921)">Drag and Drop</div>
<div id="t2" class="abs" style="left:548px;top:441.6px;font-family:'DejaVu Sans',sans-serif;font-size:28.8px;line-height:34px;color:#b4515c;white-space:nowrap;transform-origin:0 0;transform:scaleX(0.952)">Use Ready Design Elements</div>
<div id="t3" class="abs" style="left:530.3px;top:501px;font-family:'DejaVu Sans',sans-serif;font-size:48.6px;line-height:54px;color:#a85cc0;white-space:nowrap;transform-origin:0 0;transform:scaleX(0.98)">More than 1000…</div>
<div class="abs" style="left:531.5px;top:548.5px;width:421px;height:3px;background:#a85cc0"></div>
<div class="abs" style="left:1102px;top:99px;width:242px;height:635px;background:#fff;border-left:1px solid #c2c2c2;box-sizing:border-box"></div>
<div class="abs" style="left:1103px;top:100px;width:241px;height:29px;background:#ececec"></div>
<div class="abs" style="left:1111.5px;top:105px;width:201px;height:17.6px;background:#fff;border-radius:4px;box-shadow:0 0 0 0.5px rgba(0,0,0,.12),0 1px 1.5px rgba(0,0,0,.16)"></div>
<div class="abs" style="left:1120px;top:107px;font-size:13.2px;line-height:14px;color:#262626;white-space:nowrap">Woman T-Shirt 3</div>
<div class="abs" style="left:1297px;top:104px;width:16px;height:19px;border-radius:0 4px 4px 0;background:linear-gradient(#5aa7f8,#1a6ff0)"></div>
<svg class="abs" style="left:1103px;top:130px" width="241" height="600" viewBox="1140 188 241 600"><rect x="1144.9" y="261.4" width="13.4" height="13.2" rx="2.6" fill="#fff" stroke="#565656" stroke-width="1.7"/><path d="M1148.3000000000002,268.0 h6.6" stroke="#565656" stroke-width="1.7"/><rect x="1241.4" y="261.4" width="13.4" height="13.2" rx="2.6" fill="#fff" stroke="#565656" stroke-width="1.7"/><path d="M1244.8000000000002,268.0 h6.6" stroke="#565656" stroke-width="1.7"/><rect x="1144.9" y="357.9" width="13.4" height="13.2" rx="2.6" fill="#fff" stroke="#565656" stroke-width="1.7"/><path d="M1148.3000000000002,364.5 h6.6" stroke="#565656" stroke-width="1.7"/><rect x="1241.4" y="357.9" width="13.4" height="13.2" rx="2.6" fill="#fff" stroke="#565656" stroke-width="1.7"/><path d="M1244.8000000000002,364.5 h6.6" stroke="#565656" stroke-width="1.7"/><rect x="1144.9" y="454.4" width="13.4" height="13.2" rx="2.6" fill="#fff" stroke="#565656" stroke-width="1.7"/><path d="M1148.3000000000002,461.0 h6.6" stroke="#565656" stroke-width="1.7"/><rect x="1241.4" y="454.4" width="13.4" height="13.2" rx="2.6" fill="#fff" stroke="#565656" stroke-width="1.7"/><path d="M1244.8000000000002,461.0 h6.6" stroke="#565656" stroke-width="1.7"/><rect x="1144.9" y="550.9" width="13.4" height="13.2" rx="2.6" fill="#fff" stroke="#565656" stroke-width="1.7"/><path d="M1148.3000000000002,557.5 h6.6" stroke="#565656" stroke-width="1.7"/><rect x="1241.4" y="550.9" width="13.4" height="13.2" rx="2.6" fill="#fff" stroke="#565656" stroke-width="1.7"/><path d="M1244.8000000000002,557.5 h6.6" stroke="#565656" stroke-width="1.7"/><rect x="1144.9" y="647.4" width="13.4" height="13.2" rx="2.6" fill="#fff" stroke="#565656" stroke-width="1.7"/><path d="M1148.3000000000002,654.0 h6.6" stroke="#565656" stroke-width="1.7"/><rect x="1241.4" y="647.4" width="13.4" height="13.2" rx="2.6" fill="#fff" stroke="#565656" stroke-width="1.7"/><path d="M1244.8000000000002,654.0 h6.6" stroke="#565656" stroke-width="1.7"/><path d="M342,286 C360,279 380,277 400,277 C425,277 445,279 460,283 L475,293 C500,305 525,315 545,325 C550,328 552,334 553,340 L574,403 C575,407 575,410 573,412 L531,428 C526,431 524,436 524,445 C523,460 519,470 513,480 C507,500 506,520 508,535 C510,560 518,585 522,605 C526,630 529,650 532,669 C500,682 440,692 392,692.5 C350,692 310,682 281,668 C283,650 288,625 293,605 C299,585 303,560 303,527 C302,505 298,490 296,478 C291,460 289,447 288,436 C288,432 287,429 284,428 L238,407 C237,405 237,403 238,401 L259,340 C260,333 262,328 267,325 C295,312 318,302 334,292 Z" transform="translate(1160.8 200) scale(0.1633) translate(-237 -277)" fill="#000" /><path d="M342,286 C360,279 380,277 400,277 C425,277 445,279 460,283 L475,293 C500,305 525,315 545,325 C550,328 552,334 553,340 L574,403 C575,407 575,410 573,412 L531,428 C526,431 524,436 524,445 C523,460 519,470 513,480 C507,500 506,520 508,535 C510,560 518,585 522,605 C526,630 529,650 532,669 C500,682 440,692 392,692.5 C350,692 310,682 281,668 C283,650 288,625 293,605 C299,585 303,560 303,527 C302,505 298,490 296,478 C291,460 289,447 288,436 C288,432 287,429 284,428 L238,407 C237,405 237,403 238,401 L259,340 C260,333 262,328 267,325 C295,312 318,302 334,292 Z" transform="translate(1257.6 200) scale(0.1633) translate(-237 -277)" fill="#ab8bcb" /><g fill="#6d4c9f"><path d="M1163,303 C1168,301 1174,301.5 1178,300 C1179,298 1181,297 1183,298.5 C1186,297 1190,297.5 1190,299.5 C1192,300.5 1194.5,302 1194,304.5 C1191,305 1188,304 1186.5,305.5 C1186,309 1184.5,312 1186,314 C1183,314 1181,313 1180,315 L1177,316.5 C1178,314 1177,313 1175,312.5 L1172.5,310 C1175,310 1178,309.5 1179.5,307.5 C1177,305.5 1173,306 1169.5,307 C1168,305.5 1165,304.5 1163,303Z"/><path d="M1195,318.5 C1199,318 1202,318.5 1203.5,316.5 C1205,317.5 1207,318 1208,317.5 L1213,318.5 C1210,319.5 1208,320 1206.5,321.5 C1205,322.5 1203,322 1202.5,320.5 C1200,320.5 1197,319.5 1195,318.5Z"/><path d="M1169.5,336.5 L1174.5,335.8 L1171,338Z"/><path d="M1167.5,354 C1171,353 1175,353 1177.5,351 C1179,348 1182,347.5 1184,349.5 C1187,348 1190.5,348.5 1190.5,351 C1192.5,352 1194.5,353 1194,355 C1191,355.5 1188.5,355 1187,356.5 C1186.5,359 1186,361 1187,363 C1184.5,363.5 1182.5,362 1181,364.5 L1175.5,361 C1178,360.5 1180,360 1181,358 C1178,356.5 1174,357 1169.5,358.5 C1169,357 1168,355.5 1167.5,354Z"/></g><g fill="#bba3d8"><path d="M1260,304.5 C1267,300 1275,297.5 1283,297.2 C1277,299 1274,301.5 1272.5,305 C1268,305.5 1264,305.2 1260,304.5Z"/><path d="M1309,315.5 L1313.5,312.5 L1314.5,317.5Z"/><path d="M1255.5,325.2 C1262,325.6 1268,325.4 1273,325.8 C1271,327.5 1270,329 1271,330 C1274,330.8 1277,331.5 1279,332.8 C1273,332.8 1268,332 1264.5,331.5 L1261.5,333.2 C1261.5,330.5 1261,328 1260,327 Z"/><path d="M1288.5,334.5 C1295,335 1301,334.5 1306,334 C1305,340 1304.5,346 1303,351 C1298,352.5 1292,352 1288,349.5 C1284.5,347 1284.5,343.5 1288,341.5 C1291.5,340 1294,338.5 1293.5,336.5Z"/><path d="M1263,353 C1270,352 1278,352.5 1284.5,353.8 C1279,355.5 1275.5,358 1274,362.5 C1270,363.5 1265.5,364 1261.2,364.2 C1261.5,360.5 1262,356.5 1263,353Z"/></g><g fill="#a686cc"><path d="M1183,394.5 C1190,393 1198,393.5 1203,397 C1201,398 1199,399 1200,401 C1197,402.5 1195,404 1196,406.5 C1201,408.5 1208,410.5 1215.5,412.5 C1216.5,413.5 1215,415 1213,414.5 C1209,414 1205,414.5 1203,416 C1205,417.5 1205.5,419.5 1203.5,420.5 C1197,422.5 1188,422.5 1180.5,420 C1178,419 1175.5,418 1176,416.5 C1172,416.5 1166.5,417 1162.5,415.5 C1165,414 1168.5,413.5 1170,411.5 C1172,410 1169.5,408 1166,407 L1164,403.5 C1168,403.5 1171,405 1174,404.5 C1177,402 1182,401.5 1186.5,402.5 C1188,400.5 1186,398 1183,397Z"/><path d="M1172,428 C1178,425.5 1186,426 1191,429 C1190,431.5 1188,433 1189,435.5 C1194,437 1200,437.5 1205,439 C1205.5,442 1204.5,445 1205.5,448 C1204,451 1204.5,455 1202,458 L1197,460 C1191,461.5 1184,461.5 1178.5,460 C1174,458.5 1170,456 1168,453 C1172,452.5 1176,451 1178.5,449 C1182,448 1186,448.5 1188,447 C1186,445 1183,445 1183.5,443 C1186,441.5 1189,441 1189.5,439.5 C1184,438.5 1177,438.5 1171.5,438.5 C1171,435 1171,431 1172,428Z"/></g><path d="M1181,409.5 L1189,402 M1184.5,460 L1187.5,451 M1176,458 L1182,453" stroke="#fff" stroke-width="1.4"/><defs><clipPath id="t6c"><path d="M342,286 C360,279 380,277 400,277 C425,277 445,279 460,283 L475,293 C500,305 525,315 545,325 C550,328 552,334 553,340 L574,403 C575,407 575,410 573,412 L531,428 C526,431 524,436 524,445 C523,460 519,470 513,480 C507,500 506,520 508,535 C510,560 518,585 522,605 C526,630 529,650 532,669 C500,682 440,692 392,692.5 C350,692 310,682 281,668 C283,650 288,625 293,605 C299,585 303,560 303,527 C302,505 298,490 296,478 C291,460 289,447 288,436 C288,432 287,429 284,428 L238,407 C237,405 237,403 238,401 L259,340 C260,333 262,328 267,325 C295,312 318,302 334,292 Z" transform="translate(1257.6 393) scale(0.1633) translate(-237 -277)" fill="#000" /></clipPath></defs><g clip-path="url(#t6c)"><path fill="#a686cc" d="M1266,418 C1268,424 1270,428 1274,428.5 C1271,432 1269.5,436 1268.5,440 C1271,437 1273,435 1276,433.5 C1272.5,439 1270.5,445 1270,451 C1272.5,447 1275,444.5 1278.5,442.5 C1275.5,447 1275,451 1276.5,454 C1284,455.5 1294,454.5 1300.5,450.5 C1301.5,446 1301.5,441 1300.8,436 L1306,436 L1308,462 L1262,462 L1264,418Z"/><path fill="#a686cc" d="M1293.5,426.5 C1297,426 1300,424.8 1302.8,423.6 C1301.2,427.5 1300.2,431.5 1300,436 C1298.6,432 1296.6,428.6 1293.5,426.5Z"/><path fill="#a686cc" d="M1303.5,417 C1303,422 1302.4,426 1302.6,431 L1306,431 L1306,417Z"/><path fill="#a686cc" d="M1264.6,399 C1265.6,404 1266.2,409 1266.4,414 L1268.2,413 C1267.6,415 1267.2,417 1267.4,419.4 L1263.4,419.4 C1263.8,412 1263.6,405 1264.6,399Z"/><path fill="#a686cc" d="M1257.4,412 L1260.6,404 C1260.8,408 1261.6,411.5 1263.6,414.4 L1262.8,416.4Z" opacity="0.9"/><path fill="#a686cc" d="M1304.6,400.5 C1305.6,404 1305.8,407 1305.2,410 L1308.4,408.6 C1308,411 1307,413 1305.6,415 L1312.2,413.6 L1311,410.4 C1309.6,411.4 1308.8,411 1308.6,409.6 C1307.8,406.4 1306.4,403.2 1304.6,400.5Z"/></g><ellipse cx="1284.6" cy="396.2" rx="10.6" ry="2.6" fill="#a686cc"/><path d="M1272.8,396.6 C1275,401 1294,401 1296.6,396.6" fill="none" stroke="#a686cc" stroke-width="0.9" opacity="0.75"/><g fill="#4e3c8e"><path d="M1175.2,491.5 C1180,494 1186,494 1191.2,491.8 C1186,496.5 1180,496.5 1175.2,491.5Z" opacity="0.75"/><path d="M1176.5,490.3 C1179,491.8 1181,491.8 1182.5,490.8 C1184.5,491.8 1187.5,491.6 1190,490.3 C1186,493 1180.5,493 1176.5,490.3Z"/><path d="M1202.8,508.2 L1212.4,510.6 L1203.2,514.4 C1204,512.5 1204,510.5 1202.8,508.2Z"/><circle cx="1168.6" cy="529.6" r="0.9"/><path d="M1165.2,546 L1171.6,544.6 L1170.4,549.8 L1166.6,550.4Z"/><path d="M1178.5,546.5 L1181.8,543.2 L1180,546.8Z" opacity="0.8"/><path d="M1172.8,552 C1176,552.8 1180,552.6 1183.6,552 L1185.4,557.2 C1181.6,556.6 1178,556 1175,554Z"/></g><g fill="#b99bdc"><path d="M1255.4,515.2 C1259,515.4 1262.4,515.6 1265.2,516 C1264.2,519 1263.4,521.5 1263.8,524 L1261.6,524 C1262,521 1261.6,518.4 1260.2,517 Z"/><path d="M1261.8,526 L1264.4,527.6 L1262.4,527.2Z" opacity="0.7"/><path d="M1296.2,527.8 C1300.5,527.6 1305,526.6 1308.8,525.2 C1307.6,529.5 1305.6,534.5 1302.6,539.4 C1303.4,536 1303.6,533.2 1302.8,531.6 C1300.6,530.2 1298.2,529 1296.2,527.8Z"/><path d="M1305.6,536 L1306.4,542 L1305.8,542Z" opacity="0.6"/><path d="M1263.2,545.2 L1268.6,544.6 L1267.6,547.6 C1270.6,546.6 1273.6,545.2 1276.6,543.8 C1274.6,548.4 1271.6,552.8 1268.4,556.6 L1261.2,557.2 C1261.6,553 1262.2,549 1263.2,545.2Z"/><path d="M1312,504.2 L1315,505.2 L1313.6,506.6Z" opacity="0.8"/><path d="M1270,492 L1273,493.4" stroke="#d9cbe9" stroke-width="0.6"/></g><g fill="#7c58b2"><path d="M1184,586.6 C1187,586.6 1190,586.8 1192.6,587.4 L1191.4,588.6 C1189,588 1186.4,587.6 1184,586.6Z"/><path d="M1193.4,588 L1196.6,589 L1195.4,591.4Z M1197,589.4 L1198.4,591.6" opacity="0.6"/><path d="M1161,606.8 C1164,606.4 1167.6,605.2 1170.4,603.8 L1170.6,607.8 C1167.4,607.8 1164,607.4 1161,606.8Z"/><path d="M1206,604.4 C1209,602.8 1211,603.4 1212,604.4 L1215.8,604.8 L1214.2,606 C1211.4,605.6 1208.6,605.2 1206,604.4Z" opacity="0.85"/><path d="M1170.6,619.8 C1173,618.6 1176,618 1178.4,618 L1178,619.2 C1175.6,619.4 1173.6,620 1172.4,621.2 L1172,625.4 L1170.6,625Z"/><path d="M1170.6,629.2 C1173.6,628.6 1176.4,627.4 1178.6,626 L1177,628.8 C1175,630 1172.6,630.6 1170.6,631.2Z"/><path d="M1180.2,629.6 L1181.8,630.4 L1181,631.6Z"/><path d="M1204.6,631 L1205.4,634.4 L1204.8,634.4Z M1203.6,639.4 L1205.4,637.6 L1204.4,641Z" opacity="0.7"/><path d="M1167.6,645.4 C1169,647 1171,648 1173,648.2 L1176.6,646.4 L1182,643.6 L1181.4,650 L1184.4,652.6 C1179,652 1173,650 1168.6,647.6Z"/><path d="M1186.6,650.2 C1190,649 1194,648.6 1197,649.2 L1199.6,652 C1195,652.8 1190,652.6 1186.6,650.2Z"/><path d="M1167.6,594.4 L1168,598.4" stroke="#b9a4d8" stroke-width="0.5"/></g><g fill="none" stroke="#5b4a9a" stroke-linecap="round"><ellipse cx="1284.4" cy="589.6" rx="11" ry="2.9" stroke-width="0.8" stroke="#8f80be"/><path d="M1273,590.6 C1275.4,594.6 1293.6,594.6 1296,590.6" stroke-width="0.7" stroke="#a79bd0"/><path d="M1284.4,587.4 v2.4" stroke-width="0.5" stroke="#c0b6de"/><path d="M1264.6,602.6 C1264.6,608 1265.4,613 1266.6,617.4 C1267.6,619.4 1268.6,620.4 1268,621.6 C1268.4,628 1267.4,636 1266,642 C1265,646 1264.4,649 1264.2,651.6" stroke-width="0.9"/><path d="M1305.6,603.6 C1305,608 1303.6,613 1302,617.6 C1301.2,619.2 1300,620.2 1300.2,621.4 C1300.6,628 1301.6,636 1303,642 C1303.8,646 1304.2,649 1304.4,651.8" stroke-width="0.9"/><path d="M1266.6,651.6 C1276,654 1292,654 1301.6,651.6" stroke-width="0.5" stroke="#c4c0cc"/></g></svg>
<svg class="abs" style="left:0;top:0" width="1344" height="754" viewBox="0 0 1344 754" pointer-events="none"><polygon points="1339.9,113.6 1338.39,115.01 1339.39,116.81 1337.52,117.69 1337.91,119.71 1335.86,119.96 1335.61,122.01 1333.59,121.62 1332.71,123.49 1330.91,122.49 1329.5,124.0 1328.09,122.49 1326.29,123.49 1325.41,121.62 1323.39,122.01 1323.14,119.96 1321.09,119.71 1321.48,117.69 1319.61,116.81 1320.61,115.01 1319.1,113.6 1320.61,112.19 1319.61,110.39 1321.48,109.51 1321.09,107.49 1323.14,107.24 1323.39,105.19 1325.41,105.58 1326.29,103.71 1328.09,104.71 1329.5,103.2 1330.91,104.71 1332.71,103.71 1333.59,105.58 1335.61,105.19 1335.86,107.24 1337.91,107.49 1337.52,109.51 1339.39,110.39 1338.39,112.19" fill="#8c8c8c"/><circle cx="1329.5" cy="113.6" r="6.7" fill="#ececec"/><path d="M1329.5,113.6 L1331.96,106.83M1329.5,113.6 L1334.13,119.12M1329.5,113.6 L1322.41,114.85" stroke="#8c8c8c" stroke-width="1.5"/><circle cx="1329.5" cy="113.6" r="1.2" fill="#8c8c8c"/><path d="M1301.8,111.0 l3.2,-3.3 l3.2,3.3 M1301.8,115.80000000000001 l3.2,3.3 l3.2,-3.3" fill="none" stroke="#fff" stroke-width="1.5" stroke-linecap="round" stroke-linejoin="round"/></svg>
<div class="abs" style="left:0;top:733px;width:1344px;height:21px;background:#f0f0f0;border-top:1px solid #b0b0b0;box-sizing:border-box"></div>
</div>
</div>
</body></html>
